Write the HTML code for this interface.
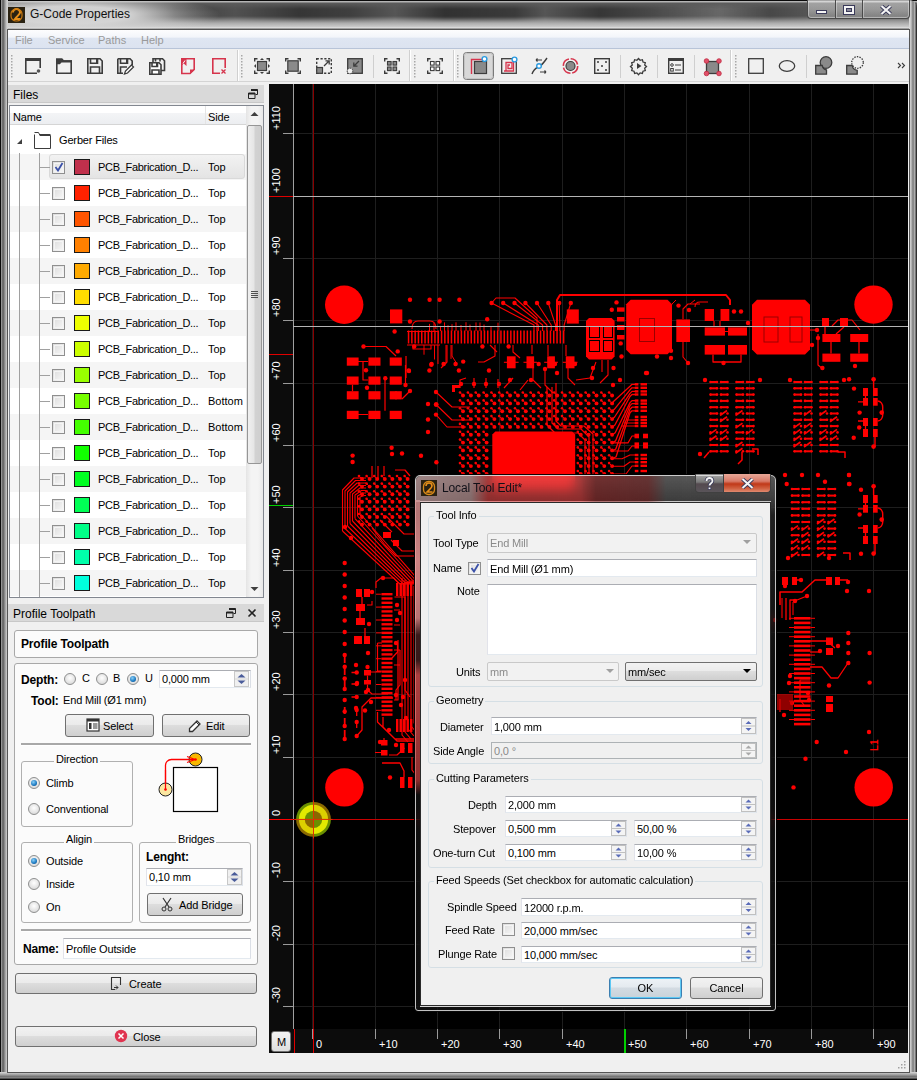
<!DOCTYPE html>
<html><head><meta charset="utf-8">
<style>
*{box-sizing:border-box;margin:0;padding:0}
html,body{width:917px;height:1080px;overflow:hidden;background:#5a5a5a}
body{position:relative;font-family:"Liberation Sans",sans-serif;font-size:11px;color:#000}
.a{position:absolute}
.t{position:absolute;white-space:nowrap;line-height:1}
#title{left:0;top:0;width:917px;height:30px;background:linear-gradient(#0a0a0a 0,#0a0a0a 1px,#b8b8b8 1px,#b0b0b0 2px,#5c5c5c 3px,#5a5a5a 16px,#9a9a9a 21px,#cccccc 27px,#e8e8e8 28px,#555 29px)}
#tglow{left:0;top:1px;width:260px;height:28px;background:radial-gradient(ellipse 150px 22px at 70px 14px,rgba(215,215,215,.95) 40%,rgba(200,200,200,0))}
#tstreak{left:0;top:3px;width:917px;height:20px;-webkit-mask-image:linear-gradient(transparent,#000 30%,#000 70%,transparent);background:linear-gradient(90deg,rgba(0,0,0,0) 130px,rgba(0,0,0,.35) 175px,rgba(0,0,0,.1) 235px,rgba(0,0,0,.4) 300px,rgba(0,0,0,.3) 350px,rgba(0,0,0,.05) 395px,rgba(0,0,0,.45) 445px,rgba(0,0,0,.35) 515px,rgba(0,0,0,.05) 545px,rgba(0,0,0,.4) 600px,rgba(0,0,0,.2) 650px,rgba(255,255,255,.08) 720px,rgba(0,0,0,.2) 770px,rgba(0,0,0,.05) 810px)}
#lframe{left:0;top:0;width:8px;height:1080px;background:linear-gradient(90deg,#0a0a0a 0,#0a0a0a 1px,#a8a8a8 1px,#5a5a5a 3px,#9a9a9a 5px,#d0d0d0 7px)}
#rframe{left:909px;top:0;width:8px;height:1080px;border-radius:0 8px 0 0;background:linear-gradient(90deg,#e0e0e0 0,#c4c4c4 2px,#7a7a7a 4px,#9a9a9a 5px,#c0c0c0 6px,#303030 7px)}
#bframe{left:0;top:1072px;width:917px;height:8px;background:linear-gradient(#d8d8d8 0,#b0b0b0 2px,#6a6a6a 5px,#9a9a9a 6px,#0a0a0a 7px)}
#client{left:7px;top:29px;width:903px;height:1044px;background:#f0f0f0;border:1px solid #555}
#menu{left:8px;top:30px;width:901px;height:19px;background:linear-gradient(#fdfdfe 0,#f3f5fa 40%,#dfe6f2 45%,#dce3f0 100%);border-bottom:1px solid #b8c4d8}
#menu span{position:absolute;top:5px;color:#9a9a9a;font-size:11px;line-height:1}
#tb{left:8px;top:49px;width:901px;height:33px;background:#f0f0f0;border-bottom:1px solid #d4d4d4}
.hdl{position:absolute;top:55px;width:3px;height:24px;background:repeating-linear-gradient(#b0b0b0 0,#b0b0b0 1px,transparent 1px,transparent 3px)}
.tsep{position:absolute;top:50px;width:1px;height:31px;background:#d8d8d8;border-right:1px solid #fff}
.isep{position:absolute;top:55px;width:1px;height:22px;background:#c8c8c8}
.ic{position:absolute;top:57px;width:18px;height:18px}
.wb{position:absolute;top:0;height:19px;border:1px solid #4a4a4a;border-top:none;background:linear-gradient(rgba(255,255,255,.45),rgba(235,235,235,.45) 50%,rgba(200,200,200,.35));box-shadow:inset 0 0 0 1px rgba(255,255,255,.35)}
</style></head><body>
<div id="title" class="a"></div>
<div id="tstreak" class="a"></div>
<div id="tglow" class="a"></div>
<div id="lframe" class="a"></div>
<div id="rframe" class="a"></div>
<div id="bframe" class="a"></div>
<div id="client" class="a"></div>
<!-- title icon & text -->
<svg class="a" style="left:8px;top:7px" width="17" height="16" viewBox="0 0 17 16"><rect width="17" height="16" fill="#2a2212"/><path d="M5 5.5a3.5 3.5 0 0 1 7 0c0 2-3 3.5-5 6.5h5.5" fill="none" stroke="#e8901a" stroke-width="2"/><rect x="3" y="2" width="11" height="12" rx="5" fill="none" stroke="#c87810" stroke-width="1.2"/></svg>
<div class="t" style="left:30px;top:8px;font-size:12px;color:#101010">G-Code Properties</div>
<!-- window buttons -->
<div class="wb" style="left:807px;width:29px;border-radius:0 0 0 4px;border-right:none"></div>
<div class="wb" style="left:835px;width:28px;border-right:none"></div>
<div class="wb" style="left:862px;width:48px;border-radius:0 0 4px 0"></div>
<div class="a" style="left:816px;top:10px;width:11px;height:4px;background:#f4f4f4;border:1px solid #3a3a5a"></div>
<div class="a" style="left:843px;top:5px;width:12px;height:10px;background:#f4f4f4;border:1px solid #3a3a5a"></div>
<div class="a" style="left:846px;top:8px;width:6px;height:4px;background:#8a8a9a;border:1px solid #3a3a5a"></div>
<svg class="a" style="left:880px;top:5px" width="12" height="10" viewBox="0 0 12 10"><path d="M1.5 1L10.5 9M10.5 1L1.5 9" stroke="#3a3a5a" stroke-width="4"/><path d="M1.5 1L10.5 9M10.5 1L1.5 9" stroke="#f4f4f4" stroke-width="2.2"/></svg>
<!-- menu -->
<div id="menu" class="a"><span style="left:7px">File</span><span style="left:40px">Service</span><span style="left:90px">Paths</span><span style="left:133px">Help</span></div>
<!-- toolbar -->
<div id="tb" class="a"></div>
<svg class="a" style="left:0;top:0" width="917" height="84" viewBox="0 0 917 84">
<g fill="none" stroke="#3c3c3c" stroke-width="1.6">
<!-- handles -->
</g>
<g fill="#a8a8a8">
<rect x="11" y="55" width="1.5" height="1.5"/><rect x="11" y="58" width="1.5" height="1.5"/><rect x="11" y="61" width="1.5" height="1.5"/><rect x="11" y="64" width="1.5" height="1.5"/><rect x="11" y="67" width="1.5" height="1.5"/><rect x="11" y="70" width="1.5" height="1.5"/><rect x="11" y="73" width="1.5" height="1.5"/><rect x="11" y="76" width="1.5" height="1.5"/>
<rect x="241" y="55" width="1.5" height="1.5"/><rect x="241" y="58" width="1.5" height="1.5"/><rect x="241" y="61" width="1.5" height="1.5"/><rect x="241" y="64" width="1.5" height="1.5"/><rect x="241" y="67" width="1.5" height="1.5"/><rect x="241" y="70" width="1.5" height="1.5"/><rect x="241" y="73" width="1.5" height="1.5"/><rect x="241" y="76" width="1.5" height="1.5"/>
<rect x="414" y="55" width="1.5" height="1.5"/><rect x="414" y="58" width="1.5" height="1.5"/><rect x="414" y="61" width="1.5" height="1.5"/><rect x="414" y="64" width="1.5" height="1.5"/><rect x="414" y="67" width="1.5" height="1.5"/><rect x="414" y="70" width="1.5" height="1.5"/><rect x="414" y="73" width="1.5" height="1.5"/><rect x="414" y="76" width="1.5" height="1.5"/>
<rect x="457" y="55" width="1.5" height="1.5"/><rect x="457" y="58" width="1.5" height="1.5"/><rect x="457" y="61" width="1.5" height="1.5"/><rect x="457" y="64" width="1.5" height="1.5"/><rect x="457" y="67" width="1.5" height="1.5"/><rect x="457" y="70" width="1.5" height="1.5"/><rect x="457" y="73" width="1.5" height="1.5"/><rect x="457" y="76" width="1.5" height="1.5"/>
<rect x="735" y="55" width="1.5" height="1.5"/><rect x="735" y="58" width="1.5" height="1.5"/><rect x="735" y="61" width="1.5" height="1.5"/><rect x="735" y="64" width="1.5" height="1.5"/><rect x="735" y="67" width="1.5" height="1.5"/><rect x="735" y="70" width="1.5" height="1.5"/><rect x="735" y="73" width="1.5" height="1.5"/><rect x="735" y="76" width="1.5" height="1.5"/>
</g>
<!-- toolbar boundaries -->
<g fill="#d0d0d0"><rect x="237" y="50" width="1" height="31"/><rect x="409" y="50" width="1" height="31"/><rect x="453" y="50" width="1" height="31"/><rect x="730" y="50" width="1" height="31"/></g>
<g fill="#fff"><rect x="238" y="50" width="1" height="31"/><rect x="410" y="50" width="1" height="31"/><rect x="454" y="50" width="1" height="31"/><rect x="731" y="50" width="1" height="31"/></g>
<!-- inner separators -->
<g fill="#cfcfcf"><rect x="373" y="55" width="1" height="23"/><rect x="620" y="55" width="1" height="23"/><rect x="657" y="55" width="1" height="23"/><rect x="694" y="55" width="1" height="23"/><rect x="806" y="55" width="1" height="23"/></g>
<!-- 1 new -->
<g stroke="#3c3c3c" fill="none" stroke-width="1.6">
<path d="M25.8 59.5V73.2H37M40.2 59.5V68"/><rect x="25" y="58" width="16" height="3" fill="#3c3c3c" stroke="none"/>
</g><circle cx="38.5" cy="71" r="1.8" fill="#555"/>
<!-- 2 open -->
<path d="M56.8 59.2H62l1.5 1.8H71.2V73.2H56.8Z" fill="none" stroke="#3c3c3c" stroke-width="1.6"/><path d="M56 58.5H62l1.5 1.8H72V62.5H61.5l-1.7 1.8H56Z" fill="#3c3c3c"/>
<!-- 3 save -->
<g fill="none" stroke="#3c3c3c" stroke-width="1.6"><path d="M87.8 58.8H100l2.2 2.2V73.2H87.8Z"/><path d="M90.5 59V63.2H97.5V59"/><path d="M90.5 73V67H99.5V73"/></g><rect x="96" y="59" width="2" height="4" fill="#3c3c3c"/>
<!-- 4 save as -->
<g fill="none" stroke="#3c3c3c" stroke-width="1.6"><path d="M117.8 58.8H130l2.2 2.2V65M117.8 58.8V73.2H123"/><path d="M120.5 59V63.2H127.5V59"/><path d="M120.5 73V67H127"/></g><rect x="126" y="59" width="2" height="4" fill="#3c3c3c"/>
<path d="M124.5 74l1-3 6-6 2 2-6 6z" fill="#fff" stroke="#3c3c3c" stroke-width="1.3"/>
<!-- 5 save all -->
<g fill="none" stroke="#3c3c3c" stroke-width="1.6"><path d="M153 62V58.8H162.5l2 2V70.5H161"/><path d="M155.5 59V61.5M160 59V61.5"/><path d="M149.8 62.8H159l2 2V74.2H149.8Z" fill="#fff"/><path d="M152 63V66.5H157.5V63"/><path d="M152 74V70H159V74"/></g><rect x="156" y="63" width="1.6" height="3.5" fill="#3c3c3c"/>
<!-- 6 red doc -->
<g fill="none" stroke="#d6344c" stroke-width="1.6"><path d="M186 58.8H194.2V69.5L190 73.5H181.8V64"/></g><path d="M181 58h5.5v8l-2.8-2.5L181 66Z" fill="#d6344c"/><path d="M190 74v-4.5h4.8Z" fill="#d6344c"/><path d="M183 63.5l2-3" stroke="#fff" stroke-width="1"/>
<!-- 7 red close -->
<g fill="none" stroke="#d6344c" stroke-width="1.6"><path d="M220 73.2H212.8V58.8H225.2V68"/><path d="M221.5 69.5l4 4M225.5 69.5l-4 4" stroke-width="1.3"/></g>
<!-- 8 zoom fit -->
<g fill="none" stroke="#3c3c3c" stroke-width="1.4"><path d="M254.7 61.5V58.7H257.5M266.5 58.7H269.3V61.5M269.3 70.5V73.3H266.5M257.5 73.3H254.7V70.5"/></g><rect x="257.5" y="61.5" width="9" height="9" fill="#8a8a8a" stroke="#3c3c3c" stroke-width="1.2"/><path d="M262 58l2 2h-4zM262 74l2-2h-4zM254 66l2-2v4zM270 66l-2-2v4z" fill="#3c3c3c"/>
<!-- 9 zoom full -->
<g fill="none" stroke="#3c3c3c" stroke-width="1.4"><path d="M285.7 61.5V58.7H288.5M297.5 58.7H300.3V61.5M300.3 70.5V73.3H297.5M288.5 73.3H285.7V70.5"/></g><rect x="287.8" y="60.8" width="10.4" height="10.4" fill="#8a8a8a" stroke="#3c3c3c" stroke-width="1.2"/>
<!-- 10 dashed -->
<rect x="316.7" y="58.7" width="14.6" height="14.6" fill="none" stroke="#3c3c3c" stroke-width="1.4" stroke-dasharray="2.2 1.6"/><rect x="316.7" y="67.5" width="5.8" height="5.8" fill="#8a8a8a" stroke="#3c3c3c" stroke-width="1.2"/><path d="M324 66l5-5M325.5 60.8h3.7v3.7" fill="none" stroke="#3c3c3c" stroke-width="1.3"/>
<!-- 11 zoom gray -->
<rect x="347.7" y="58.7" width="14.6" height="14.6" fill="#8a8a8a" stroke="#3c3c3c" stroke-width="1.3"/><circle cx="350" cy="71" r="2.8" fill="#f0f0f0" stroke="#3c3c3c" stroke-width="1" stroke-dasharray="1.5 1"/><path d="M359 61l-5 5M353.8 62.5v3.7h3.7" fill="none" stroke="#3c3c3c" stroke-width="1.3"/>
<!-- 12 grid4 filled -->
<g fill="none" stroke="#3c3c3c" stroke-width="1.4"><path d="M384.7 61.5V58.7H387.5M396.5 58.7H399.3V61.5M399.3 70.5V73.3H396.5M387.5 73.3H384.7V70.5"/></g><g fill="#8a8a8a" stroke="#3c3c3c" stroke-width="1.1"><rect x="387.5" y="61.5" width="3.6" height="3.6"/><rect x="393" y="61.5" width="3.6" height="3.6"/><rect x="387.5" y="67" width="3.6" height="3.6"/><rect x="393" y="67" width="3.6" height="3.6"/></g>
<!-- 13 grid4 outline -->
<g fill="none" stroke="#3c3c3c" stroke-width="1.4"><path d="M427.7 61.5V58.7H430.5M439.5 58.7H442.3V61.5M442.3 70.5V73.3H439.5M430.5 73.3H427.7V70.5"/></g><g fill="#fff" stroke="#3c3c3c" stroke-width="1.1"><rect x="430.5" y="61.5" width="3.6" height="3.6"/><rect x="436" y="61.5" width="3.6" height="3.6"/><rect x="430.5" y="67" width="3.6" height="3.6"/><rect x="436" y="67" width="3.6" height="3.6"/></g>
<!-- 14 pressed -->
<rect x="463.5" y="52.5" width="30" height="27" rx="3" fill="#d8d8d8" stroke="#7a7a7a" stroke-width="1"/><rect x="464.5" y="53.5" width="28" height="25" rx="2" fill="none" stroke="#c4c4c4" stroke-width="1"/>
<rect x="474.5" y="61.5" width="12" height="12" fill="#8a8a8a" stroke="#3c3c3c" stroke-width="1.2"/><path d="M471.5 74V59.5H483" fill="none" stroke="#d6344c" stroke-width="1.4"/><circle cx="484.5" cy="59" r="2.4" fill="#fff" stroke="#2a9ae0" stroke-width="1.4"/>
<!-- 15 spiral -->
<rect x="501.7" y="58.7" width="14.6" height="14.6" fill="none" stroke="#3c3c3c" stroke-width="1.3"/><path d="M506 71V62.5H512V68.5H508V65H510" fill="none" stroke="#d6344c" stroke-width="1.3"/><path d="M504 71H513.5V61" fill="none" stroke="#d6344c" stroke-width="1.3"/><circle cx="514.5" cy="59.5" r="2.4" fill="#fff" stroke="#2a9ae0" stroke-width="1.4"/>
<!-- 16 curve -->
<path d="M532 74c2-6 5-6 8-8s5-5 7-8" fill="none" stroke="#3c3c3c" stroke-width="1.4"/><circle cx="539" cy="66" r="2.3" fill="#fff" stroke="#2a9ae0" stroke-width="1.4"/><path d="M536 60h6M536 60l1.5-1.5M536 60l1.5 1.5M540 72h6M546 72l-1.5-1.5M546 72l-1.5 1.5" fill="none" stroke="#3c3c3c" stroke-width="1.1"/>
<!-- 17 red circle -->
<circle cx="570.5" cy="66" r="7.2" fill="none" stroke="#d6344c" stroke-width="1.6" stroke-dasharray="9.5 1.8"/><circle cx="570.5" cy="66" r="4.5" fill="#8a8a8a" stroke="#3c3c3c" stroke-width="1.2"/>
<!-- 18 dice -->
<rect x="594.7" y="58.7" width="14.6" height="14.6" fill="none" stroke="#3c3c3c" stroke-width="1.4"/><g fill="#3c3c3c"><circle cx="598" cy="62" r="1"/><circle cx="606" cy="62" r="1"/><circle cx="602" cy="66" r="1"/><circle cx="598" cy="70" r="1"/><circle cx="606" cy="70" r="1"/></g>
<!-- 19 gear -->
<path d="M638.5 58.5l1.6 1.8 2.3-.6.6 2.3 2.3.7-.6 2.3 1.8 1.6-1.8 1.6.6 2.3-2.3.7-.6 2.3-2.3-.6-1.6 1.8-1.6-1.8-2.3.6-.6-2.3-2.3-.7.6-2.3-1.8-1.6 1.8-1.6-.6-2.3 2.3-.7.6-2.3 2.3.6z" fill="none" stroke="#3c3c3c" stroke-width="1.3"/><path d="M637 63v6l4.5-3z" fill="#3c3c3c"/>
<!-- 20 window list -->
<rect x="668.7" y="58.7" width="14.6" height="14.6" fill="none" stroke="#3c3c3c" stroke-width="1.4"/><rect x="668" y="58" width="16" height="3" fill="#3c3c3c"/><circle cx="672" cy="65" r="1.3" fill="none" stroke="#3c3c3c"/><rect x="670.7" y="68.5" width="2.6" height="2.6" fill="none" stroke="#3c3c3c" stroke-width="1"/><path d="M675 65h6M675 70h6" stroke="#3c3c3c" stroke-width="1.2"/>
<!-- 21 red corners -->
<rect x="706.5" y="61.5" width="12" height="12" fill="#8a8a8a" stroke="#3c3c3c" stroke-width="1.3"/><g fill="#e0506a" stroke="#c02a40" stroke-width=".8"><circle cx="706.5" cy="61" r="2.3"/><circle cx="719" cy="61" r="2.3"/><circle cx="706.5" cy="73.5" r="2.3"/><circle cx="719" cy="73.5" r="2.3"/></g>
<!-- 22 rect -->
<rect x="748.7" y="58.7" width="14.6" height="14.6" fill="none" stroke="#3c3c3c" stroke-width="1.3"/>
<!-- 23 ellipse -->
<ellipse cx="787" cy="66" rx="7.7" ry="5.3" fill="none" stroke="#3c3c3c" stroke-width="1.3"/>
<!-- 24 shapes -->
<circle cx="826" cy="62.5" r="5.8" fill="#8a8a8a" stroke="#3c3c3c" stroke-width="1.3"/><path d="M815.7 65.5h6.5a5.8 5.8 0 0 0 4.3 4.5v4.2H815.7Z" fill="#8a8a8a" stroke="#3c3c3c" stroke-width="1.3"/>
<!-- 25 shapes dotted -->
<circle cx="857.5" cy="62.5" r="5.8" fill="none" stroke="#3c3c3c" stroke-width="1.3" stroke-dasharray="1.4 1.2"/><path d="M846.7 65.5h5.5a5.8 5.8 0 0 0 5 4.8v3.9H846.7Z" fill="#8a8a8a" stroke="#3c3c3c" stroke-width="1.3"/>
<!-- >> -->
<path d="M898 63l2.5 2.5-2.5 2.5M902 63l2.5 2.5-2.5 2.5" fill="none" stroke="#3c3c3c" stroke-width="1.1"/>
</svg>
<style>
.dt{position:absolute;left:8px;width:256px;height:18px;background:#d9d9d9;border-bottom:1px solid #c8c8c8}
.dt span{position:absolute;left:5px;top:4px;font-size:12px;line-height:1;color:#000}
.row{position:absolute;left:10px;width:236px;height:26px}
.cb{position:absolute;left:52px;width:13px;height:13px;border:1px solid #8f8f8f;background:linear-gradient(135deg,#dcdcdc,#f8f8f8)}
.cb::after{content:"";position:absolute;left:1px;top:1px;right:1px;bottom:1px;border:1px solid #f4f4f4}
.sw{position:absolute;left:74px;width:16px;height:16px;border:1px solid #1a1a1a}
.fn{position:absolute;left:98px;font-size:11px;letter-spacing:-0.3px;line-height:1}
.sd{position:absolute;left:208px;font-size:11px;line-height:1}
.hl{position:absolute;left:39px;width:11px;height:1px;background:#a0a0a0}
.gb{position:absolute;border:1px solid #a8a8a8;border-radius:3px;background:#fbfbfb}
.fg{position:absolute;border:1px solid #b0b0b0;border-radius:3px}
.lbl{position:absolute;font-size:11px;line-height:1;white-space:nowrap;letter-spacing:-0.15px}
.bold{font-weight:bold}
.rad{position:absolute;width:12px;height:12px;border-radius:50%;border:1px solid #8e8f8f;background:radial-gradient(circle at 50% 40%,#fff 0,#e8e8e8 50%,#d0d0d0 100%)}
.rad.on::after{content:"";position:absolute;left:2px;top:2px;width:6px;height:6px;border-radius:50%;background:radial-gradient(circle at 40% 35%,#8ad0f8 0,#1a78c0 60%,#0a3a70 100%)}
.btn{position:absolute;border:1px solid #707070;border-radius:3px;background:linear-gradient(#f2f2f2 0,#ebebeb 45%,#dddddd 50%,#cfcfcf 100%)}
.btn span{position:absolute;top:50%;transform:translateY(-50%);font-size:11px;line-height:1;white-space:nowrap;letter-spacing:-0.1px}
.sp{position:absolute;background:#fff;border:1px solid #abadb3;border-top-color:#abadb3;border-left-color:#e2e3ea;border-bottom-color:#e3e9ef;border-right-color:#dbdfe6}
.spb{position:absolute;right:1px;top:1px;bottom:1px;width:15px}
.sep{position:absolute;height:3px;border-top:2px solid #a8a8a8;border-bottom:1px solid #fff;background:#e8e8e8}
</style>
<div class="dt" style="top:85px"><span>Files</span></div>
<svg class="a" style="left:248px;top:89px" width="10" height="10" viewBox="0 0 10 10"><path d="M3 .5h6.5v5H7.5M.5 4h6.5v5.5H.5z" fill="none" stroke="#222" stroke-width="1"/><path d="M3 .5h6.5v1.5H3zM.5 4h6.5v1.5H.5z" fill="#222"/></svg>
<div class="a" style="left:9px;top:105px;width:255px;height:493px;background:#fff;border:1px solid #828790"></div>
<div class="a" style="left:10px;top:106px;width:236px;height:19px;background:linear-gradient(#fff 0,#fff 40%,#f3f4f6 41%,#eceef1);border-bottom:1px solid #d5d5d5"></div>
<div class="a" style="left:205px;top:106px;width:1px;height:18px;background:#e4e4e4"></div>
<div class="lbl" style="left:13px;top:112px">Name</div><div class="lbl" style="left:208px;top:112px">Side</div>
<div class="a" style="left:246px;top:106px;width:17px;height:491px;background:linear-gradient(90deg,#e4e4e4,#f4f4f4 30%,#f4f4f4 70%,#e8e8e8)"></div>
<svg class="a" style="left:250px;top:111px" width="9" height="6"><path d="M0.5 5L4.5 1L8.5 5z" fill="#404040"/></svg>
<svg class="a" style="left:250px;top:586px" width="9" height="6"><path d="M0.5 1L4.5 5L8.5 1z" fill="#404040"/></svg>
<div class="a" style="left:247px;top:125px;width:15px;height:339px;border:1px solid #969696;border-radius:2px;background:linear-gradient(90deg,#f0f0f0,#e6e6e6 45%,#d2d2d2 55%,#cfcfcf)"></div>
<div class="a" style="left:251px;top:291px;width:7px;height:7px;background:repeating-linear-gradient(#505050 0,#505050 1px,transparent 1px,transparent 2px)"></div>
<svg class="a" style="left:16px;top:138px" width="7" height="7"><path d="M6 1V6H1z" fill="#404040"/></svg>
<svg class="a" style="left:34px;top:132px" width="18" height="17" viewBox="0 0 18 17"><path d="M.5 2.5V16.5H16.5V3.5H6L4.5 .5H.5" fill="#fff" stroke="#3c3c3c" stroke-width="1"/><path d="M5 2H16.5V3.5H5.8z" fill="#3c3c3c"/></svg>
<div class="lbl" style="left:59px;top:135px">Gerber Files</div>

<div class="a" style="left:10px;top:154px;width:236px;height:26px;background:#f5f5f5"></div>
<div class="a" style="left:49px;top:154px;width:196px;height:25px;border:1px solid #d9d9d9;border-radius:3px;background:linear-gradient(#f2f2f2,#e4e4e4)"></div>

<div class="hl" style="top:167px"></div>
<div class="cb" style="top:161px"></div>
<div class="sw" style="top:159px;background:#c0304c"></div>
<div class="fn" style="top:162px">PCB_Fabrication_D...</div>
<div class="sd" style="top:162px">Top</div>
<div class="hl" style="top:193px"></div>
<div class="cb" style="top:187px"></div>
<div class="sw" style="top:185px;background:#ff2200"></div>
<div class="fn" style="top:188px">PCB_Fabrication_D...</div>
<div class="sd" style="top:188px">Top</div>
<div class="a" style="left:10px;top:206px;width:236px;height:26px;background:#f5f5f5"></div>
<div class="hl" style="top:219px"></div>
<div class="cb" style="top:213px"></div>
<div class="sw" style="top:211px;background:#ff5500"></div>
<div class="fn" style="top:214px">PCB_Fabrication_D...</div>
<div class="sd" style="top:214px">Top</div>
<div class="hl" style="top:245px"></div>
<div class="cb" style="top:239px"></div>
<div class="sw" style="top:237px;background:#ff8000"></div>
<div class="fn" style="top:240px">PCB_Fabrication_D...</div>
<div class="sd" style="top:240px">Top</div>
<div class="a" style="left:10px;top:258px;width:236px;height:26px;background:#f5f5f5"></div>
<div class="hl" style="top:271px"></div>
<div class="cb" style="top:265px"></div>
<div class="sw" style="top:263px;background:#ffaa00"></div>
<div class="fn" style="top:266px">PCB_Fabrication_D...</div>
<div class="sd" style="top:266px">Top</div>
<div class="hl" style="top:297px"></div>
<div class="cb" style="top:291px"></div>
<div class="sw" style="top:289px;background:#ffdd00"></div>
<div class="fn" style="top:292px">PCB_Fabrication_D...</div>
<div class="sd" style="top:292px">Top</div>
<div class="a" style="left:10px;top:310px;width:236px;height:26px;background:#f5f5f5"></div>
<div class="hl" style="top:323px"></div>
<div class="cb" style="top:317px"></div>
<div class="sw" style="top:315px;background:#eeff00"></div>
<div class="fn" style="top:318px">PCB_Fabrication_D...</div>
<div class="sd" style="top:318px">Top</div>
<div class="hl" style="top:349px"></div>
<div class="cb" style="top:343px"></div>
<div class="sw" style="top:341px;background:#ccff00"></div>
<div class="fn" style="top:344px">PCB_Fabrication_D...</div>
<div class="sd" style="top:344px">Top</div>
<div class="a" style="left:10px;top:362px;width:236px;height:26px;background:#f5f5f5"></div>
<div class="hl" style="top:375px"></div>
<div class="cb" style="top:369px"></div>
<div class="sw" style="top:367px;background:#99ff00"></div>
<div class="fn" style="top:370px">PCB_Fabrication_D...</div>
<div class="sd" style="top:370px">Top</div>
<div class="hl" style="top:401px"></div>
<div class="cb" style="top:395px"></div>
<div class="sw" style="top:393px;background:#77ff00"></div>
<div class="fn" style="top:396px">PCB_Fabrication_D...</div>
<div class="sd" style="top:396px">Bottom</div>
<div class="a" style="left:10px;top:414px;width:236px;height:26px;background:#f5f5f5"></div>
<div class="hl" style="top:427px"></div>
<div class="cb" style="top:421px"></div>
<div class="sw" style="top:419px;background:#44ff00"></div>
<div class="fn" style="top:422px">PCB_Fabrication_D...</div>
<div class="sd" style="top:422px">Bottom</div>
<div class="hl" style="top:453px"></div>
<div class="cb" style="top:447px"></div>
<div class="sw" style="top:445px;background:#11ff00"></div>
<div class="fn" style="top:448px">PCB_Fabrication_D...</div>
<div class="sd" style="top:448px">Top</div>
<div class="a" style="left:10px;top:466px;width:236px;height:26px;background:#f5f5f5"></div>
<div class="hl" style="top:479px"></div>
<div class="cb" style="top:473px"></div>
<div class="sw" style="top:471px;background:#00ff22"></div>
<div class="fn" style="top:474px">PCB_Fabrication_D...</div>
<div class="sd" style="top:474px">Top</div>
<div class="hl" style="top:505px"></div>
<div class="cb" style="top:499px"></div>
<div class="sw" style="top:497px;background:#00ff55"></div>
<div class="fn" style="top:500px">PCB_Fabrication_D...</div>
<div class="sd" style="top:500px">Top</div>
<div class="a" style="left:10px;top:518px;width:236px;height:26px;background:#f5f5f5"></div>
<div class="hl" style="top:531px"></div>
<div class="cb" style="top:525px"></div>
<div class="sw" style="top:523px;background:#00ff88"></div>
<div class="fn" style="top:526px">PCB_Fabrication_D...</div>
<div class="sd" style="top:526px">Top</div>
<div class="hl" style="top:557px"></div>
<div class="cb" style="top:551px"></div>
<div class="sw" style="top:549px;background:#00ffaa"></div>
<div class="fn" style="top:552px">PCB_Fabrication_D...</div>
<div class="sd" style="top:552px">Top</div>
<div class="a" style="left:10px;top:570px;width:236px;height:26px;background:#f5f5f5"></div>
<div class="hl" style="top:583px"></div>
<div class="cb" style="top:577px"></div>
<div class="sw" style="top:575px;background:#00ffdd"></div>
<div class="fn" style="top:578px">PCB_Fabrication_D...</div>
<div class="sd" style="top:578px">Top</div>
<svg class="a" style="left:54px;top:162px" width="10" height="10"><path d="M1.5 5L4 8.5L8.5 1" fill="none" stroke="#3a50a8" stroke-width="1.8"/></svg>
<div class="a" style="left:19px;top:153px;width:1px;height:444px;background:#a0a0a0"></div>
<div class="a" style="left:39px;top:153px;width:1px;height:444px;background:#a0a0a0"></div><!-- Profile toolpath dock -->
<div class="dt" style="top:604px"><span>Profile Toolpath</span></div>
<svg class="a" style="left:226px;top:608px" width="10" height="10" viewBox="0 0 10 10"><path d="M3 .5h6.5v5H7.5M.5 4h6.5v5.5H.5z" fill="none" stroke="#222" stroke-width="1"/><path d="M3 .5h6.5v1.5H3zM.5 4h6.5v1.5H.5z" fill="#222"/></svg>
<svg class="a" style="left:247px;top:608px" width="10" height="10" viewBox="0 0 10 10"><path d="M1.5 1.5l7 7M8.5 1.5l-7 7" stroke="#222" stroke-width="1.6"/></svg>
<div class="gb" style="left:14px;top:630px;width:244px;height:28px"></div>
<div class="lbl bold" style="left:21px;top:638px;font-size:12px">Profile Toolpath</div>
<div class="gb" style="left:14px;top:663px;width:244px;height:302px"></div>
<div class="lbl bold" style="left:21px;top:674px;font-size:12px">Depth:</div>
<div class="rad" style="left:64px;top:673px"></div><div class="lbl" style="left:82px;top:673px">C</div>
<div class="rad" style="left:96px;top:673px"></div><div class="lbl" style="left:113px;top:673px">B</div>
<div class="rad on" style="left:127px;top:673px"></div><div class="lbl" style="left:145px;top:673px">U</div>
<div class="sp" style="left:159px;top:670px;width:92px;height:18px"></div>
<div class="lbl" style="left:162px;top:674px">0,000 mm</div>
<svg class="a" style="left:234px;top:671px" width="15" height="16" viewBox="0 0 15 16"><rect x=".5" y=".5" width="14" height="15" fill="#f0f0f0" stroke="#c8c8c8"/><path d="M3.5 6.5L7.5 3L11.5 6.5z" fill="#4a5c9a"/><path d="M3.5 9.5L7.5 13L11.5 9.5z" fill="#4a5c9a"/><path d="M1 8h13" stroke="#d8d8d8"/></svg>
<div class="lbl bold" style="left:31px;top:695px;font-size:12px">Tool:</div>
<div class="lbl" style="left:63px;top:695px">End Mill (Ø1 mm)</div>
<div class="btn" style="left:65px;top:714px;width:89px;height:23px"><span style="left:37px">Select</span></div>
<svg class="a" style="left:86px;top:718px" width="14" height="14" viewBox="0 0 14 14"><rect x="1" y="1" width="12" height="12" fill="#fff" stroke="#333" stroke-width="1.2"/><rect x="1" y="1" width="12" height="2.5" fill="#333"/><rect x="3" y="5" width="2.5" height="6" fill="#333"/><path d="M7 6h4.5M7 8h4.5M7 10h4.5" stroke="#333" stroke-width="1"/></svg>
<div class="btn" style="left:162px;top:714px;width:88px;height:23px"><span style="left:43px">Edit</span></div>
<svg class="a" style="left:188px;top:719px" width="14" height="14" viewBox="0 0 14 14"><path d="M1.5 12.5V9.5L9 2l3 3-7.5 7.5z" fill="#fff" stroke="#333" stroke-width="1.3"/><path d="M8 3l3 3" stroke="#333" stroke-width="1"/></svg>
<div class="sep" style="left:21px;top:743px;width:230px"></div>
<!-- direction -->
<div class="fg" style="left:21px;top:761px;width:112px;height:66px"></div>
<div class="lbl" style="left:54px;top:754px;background:#fbfbfb;padding:0 2px">Direction</div>
<div class="rad on" style="left:28px;top:777px"></div><div class="lbl" style="left:46px;top:778px">Climb</div>
<div class="rad" style="left:28px;top:803px"></div><div class="lbl" style="left:46px;top:804px">Conventional</div>
<svg class="a" style="left:155px;top:748px" width="70" height="70" viewBox="155 748 70 70">
<rect x="173.5" y="767.5" width="44" height="44" fill="#fff" stroke="#000" stroke-width="1.2"/>
<path d="M165.5 789.5V766a6 6 0 0 1 6-6.5H195" fill="none" stroke="#ff0000" stroke-width="1.3"/>
<circle cx="195.5" cy="759.5" r="6.5" fill="#f8b800" stroke="#222" stroke-width="1"/>
<circle cx="165.5" cy="789.5" r="6.5" fill="#fbe6a0" stroke="#222" stroke-width="1"/>
<path d="M165.5 789.5V770M187 756.5l8 3-8 3M171.5 759.5H195" fill="none" stroke="#ff0000" stroke-width="1.2"/>
<circle cx="195.5" cy="759.5" r="1.3" fill="#f00"/><circle cx="165.5" cy="789.5" r="1.3" fill="#f00"/>
</svg>
<!-- align -->
<div class="fg" style="left:21px;top:842px;width:112px;height:81px"></div>
<div class="lbl" style="left:64px;top:834px;background:#fbfbfb;padding:0 2px">Aligin</div>
<div class="rad on" style="left:28px;top:855px"></div><div class="lbl" style="left:46px;top:856px">Outside</div>
<div class="rad" style="left:28px;top:878px"></div><div class="lbl" style="left:46px;top:879px">Inside</div>
<div class="rad" style="left:28px;top:901px"></div><div class="lbl" style="left:46px;top:902px">On</div>
<!-- bridges -->
<div class="fg" style="left:139px;top:842px;width:112px;height:81px"></div>
<div class="lbl" style="left:176px;top:834px;background:#fbfbfb;padding:0 2px">Bridges</div>
<div class="lbl bold" style="left:146px;top:851px;font-size:12px">Lenght:</div>
<div class="sp" style="left:146px;top:868px;width:97px;height:18px"></div>
<div class="lbl" style="left:149px;top:872px">0,10 mm</div>
<svg class="a" style="left:227px;top:869px" width="15" height="16" viewBox="0 0 15 16"><rect x=".5" y=".5" width="14" height="15" fill="#f0f0f0" stroke="#c8c8c8"/><path d="M3.5 6.5L7.5 3L11.5 6.5z" fill="#4a5c9a"/><path d="M3.5 9.5L7.5 13L11.5 9.5z" fill="#4a5c9a"/><path d="M1 8h13" stroke="#d8d8d8"/></svg>
<div class="btn" style="left:147px;top:893px;width:96px;height:23px"><span style="left:31px">Add Bridge</span></div>
<svg class="a" style="left:160px;top:897px" width="14" height="15" viewBox="0 0 14 15"><path d="M3 1l6 9M11 1l-6 9" stroke="#333" stroke-width="1.2"/><circle cx="4" cy="12" r="2" fill="none" stroke="#333"/><circle cx="10" cy="12" r="2" fill="none" stroke="#333"/></svg>
<div class="sep" style="left:21px;top:929px;width:230px"></div>
<div class="lbl bold" style="left:23px;top:943px;font-size:12px">Name:</div>
<div class="sp" style="left:63px;top:938px;width:188px;height:21px"></div>
<div class="lbl" style="left:66px;top:944px">Profile Outside</div>
<div class="btn" style="left:15px;top:973px;width:242px;height:21px"><span style="left:113px">Create</span></div>
<svg class="a" style="left:110px;top:976px" width="12" height="15" viewBox="0 0 12 15"><path d="M5 13.5H1.5V1.5H10.5V9" fill="none" stroke="#333" stroke-width="1.1"/><path d="M6 9.5l2 2-2 2M4 11.5h4" fill="none" stroke="#333" stroke-width="1"/></svg>
<div class="btn" style="left:15px;top:1026px;width:242px;height:21px"><span style="left:117px">Close</span></div>
<svg class="a" style="left:114px;top:1029px" width="14" height="14" viewBox="0 0 14 14"><circle cx="7" cy="7" r="6.2" fill="#e03450"/><path d="M4.5 4.5l5 5M9.5 4.5l-5 5" stroke="#fff" stroke-width="1.5"/></svg>
<!-- status bar -->
<div class="a" style="left:8px;top:1053px;width:901px;height:19px;background:#f0f0f0"></div>
<svg class="a" style="left:895px;top:1060px" width="12" height="11"><g fill="#a0a0a0"><rect x="9" y="1" width="1.5" height="1.5"/><rect x="6" y="4" width="1.5" height="1.5"/><rect x="9" y="4" width="1.5" height="1.5"/><rect x="3" y="7" width="1.5" height="1.5"/><rect x="6" y="7" width="1.5" height="1.5"/><rect x="9" y="7" width="1.5" height="1.5"/></g></svg>
<svg class="a" style="left:0;top:0" width="917" height="1080" viewBox="0 0 917 1080" shape-rendering="crispEdges">
<rect x="264" y="84" width="5" height="969" fill="#f0f0f0"/>
<rect x="269" y="84" width="639" height="969" fill="#000"/>
<rect x="269" y="84" width="24" height="945" fill="#0c0c0c"/>
<rect x="269" y="1029" width="639" height="24" fill="#0c0c0c"/>
<rect x="312" y="84" width="1" height="945" fill="#1e1e1e"/>
<rect x="375" y="84" width="1" height="945" fill="#1e1e1e"/>
<rect x="437" y="84" width="1" height="945" fill="#1e1e1e"/>
<rect x="499" y="84" width="1" height="945" fill="#1e1e1e"/>
<rect x="562" y="84" width="1" height="945" fill="#1e1e1e"/>
<rect x="624" y="84" width="1" height="945" fill="#1e1e1e"/>
<rect x="686" y="84" width="1" height="945" fill="#1e1e1e"/>
<rect x="749" y="84" width="1" height="945" fill="#1e1e1e"/>
<rect x="811" y="84" width="1" height="945" fill="#1e1e1e"/>
<rect x="873" y="84" width="1" height="945" fill="#1e1e1e"/>
<rect x="293" y="1006" width="615" height="1" fill="#1e1e1e"/>
<rect x="293" y="944" width="615" height="1" fill="#1e1e1e"/>
<rect x="293" y="881" width="615" height="1" fill="#1e1e1e"/>
<rect x="293" y="819" width="615" height="1" fill="#1e1e1e"/>
<rect x="293" y="757" width="615" height="1" fill="#1e1e1e"/>
<rect x="293" y="694" width="615" height="1" fill="#1e1e1e"/>
<rect x="293" y="632" width="615" height="1" fill="#1e1e1e"/>
<rect x="293" y="570" width="615" height="1" fill="#1e1e1e"/>
<rect x="293" y="507" width="615" height="1" fill="#1e1e1e"/>
<rect x="293" y="445" width="615" height="1" fill="#1e1e1e"/>
<rect x="293" y="383" width="615" height="1" fill="#1e1e1e"/>
<rect x="293" y="320" width="615" height="1" fill="#1e1e1e"/>
<rect x="293" y="258" width="615" height="1" fill="#1e1e1e"/>
<rect x="293" y="196" width="615" height="1" fill="#1e1e1e"/>
<rect x="293" y="133" width="615" height="1" fill="#1e1e1e"/>
<rect x="283" y="1006" width="10" height="1" fill="#9a9a9a"/>
<text x="280" y="1003" transform="rotate(-90 280 1003)" font-family="Liberation Sans" font-size="11" fill="#fff" shape-rendering="auto">-30</text>
<rect x="283" y="944" width="10" height="1" fill="#9a9a9a"/>
<text x="280" y="941" transform="rotate(-90 280 941)" font-family="Liberation Sans" font-size="11" fill="#fff" shape-rendering="auto">-20</text>
<rect x="283" y="881" width="10" height="1" fill="#9a9a9a"/>
<text x="280" y="878" transform="rotate(-90 280 878)" font-family="Liberation Sans" font-size="11" fill="#fff" shape-rendering="auto">-10</text>
<rect x="283" y="819" width="10" height="1" fill="#9a9a9a"/>
<text x="280" y="816" transform="rotate(-90 280 816)" font-family="Liberation Sans" font-size="11" fill="#fff" shape-rendering="auto">0</text>
<rect x="283" y="757" width="10" height="1" fill="#9a9a9a"/>
<text x="280" y="754" transform="rotate(-90 280 754)" font-family="Liberation Sans" font-size="11" fill="#fff" shape-rendering="auto">+10</text>
<rect x="283" y="694" width="10" height="1" fill="#9a9a9a"/>
<text x="280" y="691" transform="rotate(-90 280 691)" font-family="Liberation Sans" font-size="11" fill="#fff" shape-rendering="auto">+20</text>
<rect x="283" y="632" width="10" height="1" fill="#9a9a9a"/>
<text x="280" y="629" transform="rotate(-90 280 629)" font-family="Liberation Sans" font-size="11" fill="#fff" shape-rendering="auto">+30</text>
<rect x="283" y="570" width="10" height="1" fill="#9a9a9a"/>
<text x="280" y="567" transform="rotate(-90 280 567)" font-family="Liberation Sans" font-size="11" fill="#fff" shape-rendering="auto">+40</text>
<rect x="283" y="507" width="10" height="1" fill="#9a9a9a"/>
<text x="280" y="504" transform="rotate(-90 280 504)" font-family="Liberation Sans" font-size="11" fill="#fff" shape-rendering="auto">+50</text>
<rect x="283" y="445" width="10" height="1" fill="#9a9a9a"/>
<text x="280" y="442" transform="rotate(-90 280 442)" font-family="Liberation Sans" font-size="11" fill="#fff" shape-rendering="auto">+60</text>
<rect x="283" y="383" width="10" height="1" fill="#9a9a9a"/>
<text x="280" y="380" transform="rotate(-90 280 380)" font-family="Liberation Sans" font-size="11" fill="#fff" shape-rendering="auto">+70</text>
<rect x="283" y="320" width="10" height="1" fill="#9a9a9a"/>
<text x="280" y="317" transform="rotate(-90 280 317)" font-family="Liberation Sans" font-size="11" fill="#fff" shape-rendering="auto">+80</text>
<rect x="283" y="258" width="10" height="1" fill="#9a9a9a"/>
<text x="280" y="255" transform="rotate(-90 280 255)" font-family="Liberation Sans" font-size="11" fill="#fff" shape-rendering="auto">+90</text>
<rect x="283" y="196" width="10" height="1" fill="#9a9a9a"/>
<text x="280" y="193" transform="rotate(-90 280 193)" font-family="Liberation Sans" font-size="11" fill="#fff" shape-rendering="auto">+100</text>
<rect x="283" y="133" width="10" height="1" fill="#9a9a9a"/>
<text x="280" y="130" transform="rotate(-90 280 130)" font-family="Liberation Sans" font-size="11" fill="#fff" shape-rendering="auto">+110</text>
<rect x="312" y="1029" width="1" height="10" fill="#9a9a9a"/>
<text x="316" y="1048" font-family="Liberation Sans" font-size="11" fill="#fff" shape-rendering="auto">0</text>
<rect x="375" y="1029" width="1" height="10" fill="#9a9a9a"/>
<text x="379" y="1048" font-family="Liberation Sans" font-size="11" fill="#fff" shape-rendering="auto">+10</text>
<rect x="437" y="1029" width="1" height="10" fill="#9a9a9a"/>
<text x="441" y="1048" font-family="Liberation Sans" font-size="11" fill="#fff" shape-rendering="auto">+20</text>
<rect x="499" y="1029" width="1" height="10" fill="#9a9a9a"/>
<text x="503" y="1048" font-family="Liberation Sans" font-size="11" fill="#fff" shape-rendering="auto">+30</text>
<rect x="562" y="1029" width="1" height="10" fill="#9a9a9a"/>
<text x="566" y="1048" font-family="Liberation Sans" font-size="11" fill="#fff" shape-rendering="auto">+40</text>
<rect x="624" y="1029" width="1" height="10" fill="#9a9a9a"/>
<text x="628" y="1048" font-family="Liberation Sans" font-size="11" fill="#fff" shape-rendering="auto">+50</text>
<rect x="686" y="1029" width="1" height="10" fill="#9a9a9a"/>
<text x="690" y="1048" font-family="Liberation Sans" font-size="11" fill="#fff" shape-rendering="auto">+60</text>
<rect x="749" y="1029" width="1" height="10" fill="#9a9a9a"/>
<text x="753" y="1048" font-family="Liberation Sans" font-size="11" fill="#fff" shape-rendering="auto">+70</text>
<rect x="811" y="1029" width="1" height="10" fill="#9a9a9a"/>
<text x="815" y="1048" font-family="Liberation Sans" font-size="11" fill="#fff" shape-rendering="auto">+80</text>
<rect x="873" y="1029" width="1" height="10" fill="#9a9a9a"/>
<text x="877" y="1048" font-family="Liberation Sans" font-size="11" fill="#fff" shape-rendering="auto">+90</text>
<rect x="293" y="84" width="1" height="945" fill="#a0a0a0"/>
<rect x="313" y="84" width="1" height="969" fill="#8a0000"/>
<rect x="293" y="819" width="615" height="1" fill="#c80000"/>
<rect x="269" y="196" width="24" height="1" fill="#e00000"/>
<rect x="269" y="354" width="24" height="1" fill="#e00000"/>
<rect x="269" y="819" width="24" height="1" fill="#ff0000"/>
<rect x="294" y="1029" width="1" height="24" fill="#e00000"/>
<rect x="313" y="1029" width="1" height="24" fill="#e00000"/>
<rect x="624" y="1029" width="2" height="24" fill="#00d000"/>
<rect x="269" y="505" width="24" height="1" fill="#00d000"/>
</svg>
<div class="btn" style="left:271px;top:1031px;width:20px;height:21px;background:linear-gradient(#f4f4f4,#dedede)"><span style="left:5px">M</span></div><svg class="a" style="left:0;top:0" width="917" height="1080" viewBox="0 0 917 1080"><defs><clipPath id="vc"><rect x="294" y="84" width="614" height="945"/></clipPath></defs><g clip-path="url(#vc)" fill="#ff0000"><circle cx="344.2" cy="304.8" r="19.2"/>
<circle cx="873.5" cy="304.6" r="19.2"/>
<circle cx="344.4" cy="787.4" r="19.2"/>
<circle cx="873.7" cy="787.4" r="19.2"/>
<rect x="390.0" y="309.4" width="12.3" height="14.0"/>
<circle cx="410.0" cy="299.8" r="2.2"/>
<circle cx="429.6" cy="299.8" r="2.2"/>
<circle cx="439.6" cy="299.8" r="2.2"/>
<circle cx="459.4" cy="299.8" r="2.2"/>
<circle cx="410.0" cy="321.5" r="2.2"/>
<circle cx="439.6" cy="321.5" r="2.2"/>
<circle cx="394.6" cy="331.5" r="2.2"/>
<circle cx="363.5" cy="346.5" r="2.2"/>
<circle cx="397.7" cy="351.4" r="2.2"/>
<circle cx="366.0" cy="370.3" r="2.2"/>
<circle cx="367.0" cy="387.8" r="2.2"/>
<circle cx="385.3" cy="378.2" r="2.2"/>
<circle cx="409.0" cy="371.0" r="2.2"/>
<circle cx="405.5" cy="385.0" r="2.2"/>
<circle cx="410.0" cy="391.0" r="2.2"/>
<circle cx="431.3" cy="364.8" r="2.2"/>
<circle cx="428.0" cy="404.0" r="2.2"/>
<circle cx="436.4" cy="404.5" r="2.2"/>
<circle cx="428.0" cy="419.5" r="2.2"/>
<circle cx="421.0" cy="455.8" r="2.2"/>
<circle cx="436.4" cy="462.2" r="2.2"/>
<circle cx="391.6" cy="447.8" r="2.2"/>
<circle cx="392.0" cy="454.0" r="2.2"/>
<circle cx="402.0" cy="453.5" r="2.2"/>
<circle cx="352.6" cy="455.6" r="2.2"/>
<circle cx="352.6" cy="462.0" r="2.2"/>
<rect x="346.8" y="357.5" width="11.8" height="8.2"/>
<rect x="368.4" y="357.5" width="12.1" height="8.2"/>
<rect x="389.7" y="357.5" width="12.1" height="8.2"/>
<rect x="346.8" y="376.5" width="11.8" height="8.2"/>
<rect x="368.4" y="376.5" width="12.1" height="8.2"/>
<rect x="389.7" y="376.5" width="12.1" height="8.2"/>
<rect x="346.8" y="391.2" width="11.8" height="8.2"/>
<rect x="368.4" y="391.2" width="12.1" height="8.2"/>
<rect x="389.7" y="391.2" width="12.1" height="8.2"/>
<rect x="346.8" y="410.8" width="11.8" height="8.2"/>
<rect x="368.4" y="410.8" width="12.1" height="8.2"/>
<rect x="389.7" y="410.8" width="12.1" height="8.2"/>
<path d="M358 361.5H368M358 414.5H368M352.5 384.7V391.2M363.5 346.5H386L396 356" fill="none" stroke="#ff0000" stroke-width="1.2" stroke-linejoin="round"/>
<path d="M363 361.5V380H368M374 346.5" fill="none" stroke="#ff0000" stroke-width="1.2" stroke-linejoin="round"/>
<path d="M385 380V410.8M396 399.4V391M405.5 385V365M410 391L402 399" fill="none" stroke="#ff0000" stroke-width="1.2" stroke-linejoin="round"/>
<path d="M406 356V378" fill="none" stroke="#ff0000" stroke-width="1.2" stroke-linejoin="round"/>
<rect x="407.80" y="330.5" width="1.5" height="13"/>
<rect x="411.10" y="330.5" width="1.5" height="13"/>
<rect x="414.40" y="330.5" width="1.5" height="13"/>
<rect x="417.70" y="330.5" width="1.5" height="13"/>
<rect x="421.00" y="330.5" width="1.5" height="13"/>
<rect x="424.30" y="330.5" width="1.5" height="13"/>
<rect x="427.60" y="330.5" width="1.5" height="13"/>
<rect x="430.90" y="330.5" width="1.5" height="13"/>
<rect x="434.20" y="330.5" width="1.5" height="13"/>
<rect x="437.50" y="330.5" width="1.5" height="13"/>
<rect x="440.80" y="330.5" width="1.5" height="13"/>
<rect x="444.10" y="330.5" width="1.5" height="13"/>
<rect x="447.40" y="330.5" width="1.5" height="13"/>
<rect x="450.70" y="330.5" width="1.5" height="13"/>
<rect x="454.00" y="330.5" width="1.5" height="13"/>
<rect x="457.30" y="330.5" width="1.5" height="13"/>
<rect x="460.60" y="330.5" width="1.5" height="13"/>
<rect x="463.90" y="330.5" width="1.5" height="13"/>
<rect x="467.20" y="330.5" width="1.5" height="13"/>
<rect x="470.50" y="330.5" width="1.5" height="13"/>
<rect x="473.80" y="330.5" width="1.5" height="13"/>
<rect x="477.10" y="330.5" width="1.5" height="13"/>
<rect x="480.40" y="330.5" width="1.5" height="13"/>
<rect x="483.70" y="330.5" width="1.5" height="13"/>
<rect x="487.00" y="330.5" width="1.5" height="13"/>
<rect x="490.30" y="330.5" width="1.5" height="13"/>
<rect x="493.60" y="330.5" width="1.5" height="13"/>
<rect x="496.90" y="330.5" width="1.5" height="13"/>
<rect x="500.20" y="330.5" width="1.5" height="13"/>
<rect x="503.50" y="330.5" width="1.5" height="13"/>
<rect x="506.80" y="330.5" width="1.5" height="13"/>
<rect x="510.10" y="330.5" width="1.5" height="13"/>
<rect x="513.40" y="330.5" width="1.5" height="13"/>
<rect x="516.70" y="330.5" width="1.5" height="13"/>
<rect x="520.00" y="330.5" width="1.5" height="13"/>
<rect x="523.30" y="330.5" width="1.5" height="13"/>
<rect x="526.60" y="330.5" width="1.5" height="13"/>
<rect x="529.90" y="330.5" width="1.5" height="13"/>
<rect x="533.20" y="330.5" width="1.5" height="13"/>
<rect x="536.50" y="330.5" width="1.5" height="13"/>
<rect x="539.80" y="330.5" width="1.5" height="13"/>
<rect x="543.10" y="330.5" width="1.5" height="13"/>
<rect x="546.40" y="330.5" width="1.5" height="13"/>
<rect x="549.70" y="330.5" width="1.5" height="13"/>
<rect x="553.00" y="330.5" width="1.5" height="13"/>
<rect x="556.30" y="330.5" width="1.5" height="13"/>
<rect x="559.60" y="330.5" width="1.5" height="13"/>
<rect x="562.90" y="330.5" width="1.5" height="13"/>
<path d="M407 331.5H438M407 345H440" fill="none" stroke="#ff0000" stroke-width="1.0" stroke-linejoin="round"/>
<path d="M412 329c0-6 2-8 6-8h12c4 0 6 2 6 8" fill="none" stroke="#ff0000" stroke-width="1.1" stroke-linejoin="round"/>
<path d="M413 345v4h18v-4" fill="none" stroke="#ff0000" stroke-width="1.1" stroke-linejoin="round"/>
<path d="M429.5 331V323.9" fill="none" stroke="#ff0000" stroke-width="1.0" stroke-linejoin="round"/>
<path d="M434 331V322.9" fill="none" stroke="#ff0000" stroke-width="1.0" stroke-linejoin="round"/>
<path d="M440.5 331V325.9" fill="none" stroke="#ff0000" stroke-width="1.0" stroke-linejoin="round"/>
<path d="M444.5 331V322.4" fill="none" stroke="#ff0000" stroke-width="1.0" stroke-linejoin="round"/>
<path d="M448 331V325.2" fill="none" stroke="#ff0000" stroke-width="1.0" stroke-linejoin="round"/>
<path d="M452 331V324.2" fill="none" stroke="#ff0000" stroke-width="1.0" stroke-linejoin="round"/>
<path d="M456 331V322.3" fill="none" stroke="#ff0000" stroke-width="1.0" stroke-linejoin="round"/>
<path d="M461 331V325.0" fill="none" stroke="#ff0000" stroke-width="1.0" stroke-linejoin="round"/>
<path d="M466 331V322.2" fill="none" stroke="#ff0000" stroke-width="1.0" stroke-linejoin="round"/>
<path d="M470 331V324.6" fill="none" stroke="#ff0000" stroke-width="1.0" stroke-linejoin="round"/>
<path d="M476 331V322.4" fill="none" stroke="#ff0000" stroke-width="1.0" stroke-linejoin="round"/>
<path d="M480 331V322.5" fill="none" stroke="#ff0000" stroke-width="1.0" stroke-linejoin="round"/>
<path d="M484 331V324.5" fill="none" stroke="#ff0000" stroke-width="1.0" stroke-linejoin="round"/>
<path d="M491 331V327.0" fill="none" stroke="#ff0000" stroke-width="1.0" stroke-linejoin="round"/>
<path d="M498 331V322.7" fill="none" stroke="#ff0000" stroke-width="1.0" stroke-linejoin="round"/>
<path d="M424 345V354.7" fill="none" stroke="#ff0000" stroke-width="1.0" stroke-linejoin="round"/>
<path d="M434.5 345V359.5" fill="none" stroke="#ff0000" stroke-width="1.0" stroke-linejoin="round"/>
<path d="M446 345V363.4" fill="none" stroke="#ff0000" stroke-width="1.0" stroke-linejoin="round"/>
<path d="M451 345V358.9" fill="none" stroke="#ff0000" stroke-width="1.0" stroke-linejoin="round"/>
<path d="M447 345V362L441 368" fill="none" stroke="#ff0000" stroke-width="1.1" stroke-linejoin="round"/>
<path d="M438 345V364" fill="none" stroke="#ff0000" stroke-width="1.0" stroke-linejoin="round"/>
<path d="M452 345V356L457 364" fill="none" stroke="#ff0000" stroke-width="1.0" stroke-linejoin="round"/>
<path d="M490 345L497 352" fill="none" stroke="#ff0000" stroke-width="1.1" stroke-linejoin="round"/>
<path d="M513 345V352L520 358" fill="none" stroke="#ff0000" stroke-width="1.1" stroke-linejoin="round"/>
<path d="M495 345V356L484 362H478" fill="none" stroke="#ff0000" stroke-width="1.1" stroke-linejoin="round"/>
<circle cx="491.6" cy="303.0" r="2.2"/>
<circle cx="503.2" cy="303.0" r="2.2"/>
<circle cx="514.5" cy="303.0" r="2.2"/>
<circle cx="525.4" cy="303.0" r="2.2"/>
<circle cx="537.0" cy="303.0" r="2.2"/>
<circle cx="548.3" cy="303.0" r="2.2"/>
<circle cx="559.2" cy="303.0" r="2.2"/>
<circle cx="570.8" cy="303.0" r="2.2"/>
<path d="M491.6 303L534.0 325V331" fill="none" stroke="#ff0000" stroke-width="1.1" stroke-linejoin="round"/>
<path d="M503.2 303L538.3 325V331" fill="none" stroke="#ff0000" stroke-width="1.1" stroke-linejoin="round"/>
<path d="M514.5 303L542.6 325V331" fill="none" stroke="#ff0000" stroke-width="1.1" stroke-linejoin="round"/>
<path d="M525.4 303L546.9 325V331" fill="none" stroke="#ff0000" stroke-width="1.1" stroke-linejoin="round"/>
<path d="M537 303L551.2 325V331" fill="none" stroke="#ff0000" stroke-width="1.1" stroke-linejoin="round"/>
<path d="M548.3 303L555.5 325V331" fill="none" stroke="#ff0000" stroke-width="1.1" stroke-linejoin="round"/>
<path d="M559.2 303L559.8 325V331" fill="none" stroke="#ff0000" stroke-width="1.1" stroke-linejoin="round"/>
<path d="M570.8 303L564.1 325V331" fill="none" stroke="#ff0000" stroke-width="1.1" stroke-linejoin="round"/>
<path d="M491.6 303L496 298H515L537 318V331" fill="none" stroke="#ff0000" stroke-width="1.1" stroke-linejoin="round"/>
<path d="M557 331V300L560 295H630" fill="none" stroke="#ff0000" stroke-width="2.0" stroke-linejoin="round"/>
<path d="M630 295H726L730 300V305" fill="none" stroke="#ff0000" stroke-width="2.0" stroke-linejoin="round"/>
<rect x="566.8" y="309.4" width="12.0" height="14.2"/>
<circle cx="487.2" cy="319.3" r="2.2"/>
<circle cx="414.2" cy="346.5" r="2.2"/>
<circle cx="482.4" cy="346.5" r="2.2"/>
<circle cx="508.6" cy="346.5" r="2.2"/>
<circle cx="431.6" cy="364.0" r="2.2"/>
<circle cx="443.6" cy="364.0" r="2.2"/>
<circle cx="455.6" cy="364.0" r="2.2"/>
<circle cx="463.2" cy="361.6" r="2.2"/>
<circle cx="408.7" cy="370.5" r="2.2"/>
<circle cx="429.4" cy="370.5" r="2.2"/>
<circle cx="458.9" cy="370.5" r="2.2"/>
<circle cx="489.0" cy="370.5" r="2.2"/>
<circle cx="510.0" cy="364.0" r="2.2"/>
<circle cx="538.7" cy="364.0" r="2.2"/>
<circle cx="555.0" cy="364.0" r="2.2"/>
<circle cx="575.0" cy="364.0" r="2.2"/>
<circle cx="557.0" cy="373.0" r="2.2"/>
<circle cx="545.0" cy="369.0" r="2.2"/>
<rect x="506.9" y="356.3" width="8.7" height="12.0"/>
<path d="M503.9 362.3H518.6" fill="none" stroke="#ff0000" stroke-width="1.1" stroke-linejoin="round"/>
<rect x="526.5" y="356.3" width="7.6" height="12.0"/>
<path d="M523.5 362.3H537.1" fill="none" stroke="#ff0000" stroke-width="1.1" stroke-linejoin="round"/>
<rect x="547.2" y="356.3" width="7.7" height="12.0"/>
<path d="M544.2 362.3H557.9" fill="none" stroke="#ff0000" stroke-width="1.1" stroke-linejoin="round"/>
<rect x="565.8" y="356.3" width="8.7" height="12.0"/>
<path d="M562.8 362.3H577.5" fill="none" stroke="#ff0000" stroke-width="1.1" stroke-linejoin="round"/>
<path d="M532 345V354M548 345V356M566 345V356" fill="none" stroke="#ff0000" stroke-width="1.1" stroke-linejoin="round"/>
<path d="M545 368V385L553 393" fill="none" stroke="#ff0000" stroke-width="1.1" stroke-linejoin="round"/>
<path d="M533 368V380L541 388" fill="none" stroke="#ff0000" stroke-width="1.1" stroke-linejoin="round"/>
<path d="M568 368V378L575 385" fill="none" stroke="#ff0000" stroke-width="1.1" stroke-linejoin="round"/>
<path d="M589 318H611.6L614.6 321V356.5L611.6 359.5H589L586 356.5V321Z"/>
<g fill="#000"><rect x="589" y="326" width="11" height="12"/><rect x="603" y="326" width="10" height="12"/><rect x="589" y="340" width="11" height="12"/><rect x="603" y="340" width="10" height="12"/></g>
<rect x="590.0" y="327.0" width="9.0" height="10.0"/>
<rect x="604.0" y="327.0" width="8.0" height="10.0"/>
<rect x="590.0" y="341.0" width="9.0" height="10.0"/>
<rect x="604.0" y="341.0" width="8.0" height="10.0"/>
<rect x="617.0" y="307.4" width="7.5" height="4.3"/>
<rect x="617.0" y="317.0" width="7.5" height="4.5"/>
<rect x="617.0" y="325.0" width="7.5" height="5.0"/>
<rect x="617.0" y="335.0" width="7.5" height="4.5"/>
<circle cx="616.5" cy="302.4" r="2.2"/>
<circle cx="611.8" cy="309.8" r="2.2"/>
<circle cx="620.7" cy="343.4" r="2.2"/>
<circle cx="621.5" cy="356.5" r="2.2"/>
<circle cx="613.5" cy="368.0" r="2.2"/>
<circle cx="646.0" cy="373.0" r="2.2"/>
<circle cx="657.0" cy="356.5" r="2.2"/>
<circle cx="671.0" cy="350.7" r="2.2"/>
<circle cx="671.0" cy="358.0" r="2.2"/>
<circle cx="678.5" cy="305.6" r="2.2"/>
<circle cx="689.0" cy="310.0" r="2.2"/>
<circle cx="688.0" cy="363.0" r="2.2"/>
<circle cx="593.0" cy="368.0" r="2.2"/>
<path d="M602 360V372M596 362L590 378L576 380" fill="none" stroke="#ff0000" stroke-width="1.1" stroke-linejoin="round"/>
<path d="M608 360V375L600 383" fill="none" stroke="#ff0000" stroke-width="1.1" stroke-linejoin="round"/>
<path d="M630.7 299.7H667.5L672 304.2V349.7L667.5 354.2H630.7L626.2 349.7V304.2Z"/>
<path d="M757 299.7H805L810 304.7V349.6L805 354.6H757L752 349.6V304.7Z"/>
<rect x="676.3" y="319.4" width="13.7" height="22.6"/>
<path d="M683 342V357L688 363" fill="none" stroke="#ff0000" stroke-width="1.1" stroke-linejoin="round"/>
<path d="M683 319V309L688 304H700" fill="none" stroke="#ff0000" stroke-width="1.1" stroke-linejoin="round"/>
<g fill="none" stroke="#9a0000" stroke-width="1"><rect x="639.5" y="318.5" width="15" height="23"/><rect x="764" y="317" width="14" height="25"/><rect x="790" y="317" width="12" height="25"/></g>
<rect x="704.7" y="309.0" width="9.3" height="12.0"/>
<rect x="720.5" y="309.0" width="8.8" height="12.0"/>
<rect x="704.7" y="327.4" width="20.3" height="8.2"/>
<rect x="728.0" y="327.4" width="19.0" height="8.2"/>
<rect x="704.7" y="345.0" width="20.3" height="9.6"/>
<rect x="728.0" y="345.0" width="19.0" height="9.6"/>
<path d="M725 331.5H728M714 321V327M720 321V327" fill="none" stroke="#ff0000" stroke-width="1.2" stroke-linejoin="round"/>
<path d="M713 354.6V362H741V354.6" fill="none" stroke="#ff0000" stroke-width="1.3" stroke-linejoin="round"/>
<circle cx="734.0" cy="311.5" r="2.2"/>
<circle cx="741.0" cy="311.5" r="2.2"/>
<circle cx="748.0" cy="323.0" r="2.2"/>
<circle cx="723.5" cy="363.0" r="2.2"/>
<circle cx="755.0" cy="345.0" r="2.2"/>
<circle cx="757.0" cy="350.0" r="2.2"/>
<path d="M695 307c0-3 2-5 5-5h8" fill="none" stroke="#ff0000" stroke-width="1.1" stroke-linejoin="round"/>
<rect x="822.4" y="334.0" width="18.0" height="8.0"/>
<rect x="850.2" y="334.0" width="18.0" height="8.0"/>
<rect x="822.4" y="353.6" width="18.0" height="8.2"/>
<rect x="850.2" y="353.6" width="18.0" height="8.2"/>
<rect x="822.0" y="318.0" width="7.0" height="9.0"/>
<rect x="840.0" y="318.0" width="8.0" height="9.0"/>
<path d="M831 342V353.6M859 342V353.6M825 327V334M844 327L836 334" fill="none" stroke="#ff0000" stroke-width="1.3" stroke-linejoin="round"/>
<path d="M818 334V365L823 369M832 326L838 320H852L860 330" fill="none" stroke="#ff0000" stroke-width="1.2" stroke-linejoin="round"/>
<circle cx="822.4" cy="368.0" r="2.2"/>
<circle cx="855.0" cy="366.0" r="2.2"/>
<circle cx="817.0" cy="330.0" r="2.2"/>
<circle cx="818.0" cy="338.0" r="2.2"/>
<circle cx="812.0" cy="345.0" r="2.2"/>
<path d="M810 330H818" fill="none" stroke="#ff0000" stroke-width="1.1" stroke-linejoin="round"/>
<path d="M672 304L676 300M690 304L695 300" fill="none" stroke="#ff0000" stroke-width="1.0" stroke-linejoin="round"/>
<rect x="710.0" y="381.0" width="7.5" height="2"/>
<circle cx="710.5" cy="382.0" r="1.3"/>
<circle cx="717.0" cy="382.0" r="1.3"/>
<rect x="720.5" y="381.0" width="7.5" height="2"/>
<circle cx="721.0" cy="382.0" r="1.3"/>
<circle cx="727.5" cy="382.0" r="1.3"/>
<rect x="736.0" y="381.0" width="7.5" height="2"/>
<circle cx="736.5" cy="382.0" r="1.3"/>
<circle cx="743.0" cy="382.0" r="1.3"/>
<rect x="746.5" y="381.0" width="7.5" height="2"/>
<circle cx="747.0" cy="382.0" r="1.3"/>
<circle cx="753.5" cy="382.0" r="1.3"/>
<rect x="710.0" y="387.3" width="7.5" height="2"/>
<circle cx="710.5" cy="388.3" r="1.3"/>
<circle cx="717.0" cy="388.3" r="1.3"/>
<rect x="720.5" y="387.3" width="7.5" height="2"/>
<circle cx="721.0" cy="388.3" r="1.3"/>
<circle cx="727.5" cy="388.3" r="1.3"/>
<rect x="736.0" y="387.3" width="7.5" height="2"/>
<circle cx="736.5" cy="388.3" r="1.3"/>
<circle cx="743.0" cy="388.3" r="1.3"/>
<rect x="746.5" y="387.3" width="7.5" height="2"/>
<circle cx="747.0" cy="388.3" r="1.3"/>
<circle cx="753.5" cy="388.3" r="1.3"/>
<rect x="710.0" y="393.6" width="7.5" height="2"/>
<circle cx="710.5" cy="394.6" r="1.3"/>
<circle cx="717.0" cy="394.6" r="1.3"/>
<rect x="720.5" y="393.6" width="7.5" height="2"/>
<circle cx="721.0" cy="394.6" r="1.3"/>
<circle cx="727.5" cy="394.6" r="1.3"/>
<rect x="736.0" y="393.6" width="7.5" height="2"/>
<circle cx="736.5" cy="394.6" r="1.3"/>
<circle cx="743.0" cy="394.6" r="1.3"/>
<rect x="746.5" y="393.6" width="7.5" height="2"/>
<circle cx="747.0" cy="394.6" r="1.3"/>
<circle cx="753.5" cy="394.6" r="1.3"/>
<rect x="710.0" y="399.9" width="7.5" height="2"/>
<circle cx="710.5" cy="400.9" r="1.3"/>
<circle cx="717.0" cy="400.9" r="1.3"/>
<rect x="720.5" y="399.9" width="7.5" height="2"/>
<circle cx="721.0" cy="400.9" r="1.3"/>
<circle cx="727.5" cy="400.9" r="1.3"/>
<rect x="736.0" y="399.9" width="7.5" height="2"/>
<circle cx="736.5" cy="400.9" r="1.3"/>
<circle cx="743.0" cy="400.9" r="1.3"/>
<rect x="746.5" y="399.9" width="7.5" height="2"/>
<circle cx="747.0" cy="400.9" r="1.3"/>
<circle cx="753.5" cy="400.9" r="1.3"/>
<rect x="710.0" y="406.2" width="7.5" height="2"/>
<circle cx="710.5" cy="407.2" r="1.3"/>
<circle cx="717.0" cy="407.2" r="1.3"/>
<rect x="720.5" y="406.2" width="7.5" height="2"/>
<circle cx="721.0" cy="407.2" r="1.3"/>
<circle cx="727.5" cy="407.2" r="1.3"/>
<rect x="736.0" y="406.2" width="7.5" height="2"/>
<circle cx="736.5" cy="407.2" r="1.3"/>
<circle cx="743.0" cy="407.2" r="1.3"/>
<rect x="746.5" y="406.2" width="7.5" height="2"/>
<circle cx="747.0" cy="407.2" r="1.3"/>
<circle cx="753.5" cy="407.2" r="1.3"/>
<rect x="710.0" y="412.5" width="7.5" height="2"/>
<circle cx="710.5" cy="413.5" r="1.3"/>
<circle cx="717.0" cy="413.5" r="1.3"/>
<path d="M720.0 415.5L727.0 410.5" fill="none" stroke="#ff0000" stroke-width="1.7" stroke-linejoin="round"/>
<circle cx="721.0" cy="413.5" r="1.3"/>
<circle cx="727.5" cy="413.5" r="1.3"/>
<path d="M735.5 415.5L742.5 410.5" fill="none" stroke="#ff0000" stroke-width="1.7" stroke-linejoin="round"/>
<circle cx="736.5" cy="413.5" r="1.3"/>
<circle cx="743.0" cy="413.5" r="1.3"/>
<rect x="746.5" y="412.5" width="7.5" height="2"/>
<circle cx="747.0" cy="413.5" r="1.3"/>
<circle cx="753.5" cy="413.5" r="1.3"/>
<rect x="710.0" y="418.8" width="7.5" height="2"/>
<circle cx="710.5" cy="419.8" r="1.3"/>
<circle cx="717.0" cy="419.8" r="1.3"/>
<path d="M720.0 421.8L727.0 416.8" fill="none" stroke="#ff0000" stroke-width="1.7" stroke-linejoin="round"/>
<circle cx="721.0" cy="419.8" r="1.3"/>
<circle cx="727.5" cy="419.8" r="1.3"/>
<rect x="736.0" y="418.8" width="7.5" height="2"/>
<circle cx="736.5" cy="419.8" r="1.3"/>
<circle cx="743.0" cy="419.8" r="1.3"/>
<rect x="746.5" y="418.8" width="7.5" height="2"/>
<circle cx="747.0" cy="419.8" r="1.3"/>
<circle cx="753.5" cy="419.8" r="1.3"/>
<rect x="710.0" y="425.1" width="7.5" height="2"/>
<circle cx="710.5" cy="426.1" r="1.3"/>
<circle cx="717.0" cy="426.1" r="1.3"/>
<rect x="720.5" y="425.1" width="7.5" height="2"/>
<circle cx="721.0" cy="426.1" r="1.3"/>
<circle cx="727.5" cy="426.1" r="1.3"/>
<path d="M735.5 428.1L742.5 423.1" fill="none" stroke="#ff0000" stroke-width="1.7" stroke-linejoin="round"/>
<circle cx="736.5" cy="426.1" r="1.3"/>
<circle cx="743.0" cy="426.1" r="1.3"/>
<rect x="746.5" y="425.1" width="7.5" height="2"/>
<circle cx="747.0" cy="426.1" r="1.3"/>
<circle cx="753.5" cy="426.1" r="1.3"/>
<path d="M709.5 434.4L716.5 429.4" fill="none" stroke="#ff0000" stroke-width="1.7" stroke-linejoin="round"/>
<circle cx="710.5" cy="432.4" r="1.3"/>
<circle cx="717.0" cy="432.4" r="1.3"/>
<path d="M720.0 434.4L727.0 429.4" fill="none" stroke="#ff0000" stroke-width="1.7" stroke-linejoin="round"/>
<circle cx="721.0" cy="432.4" r="1.3"/>
<circle cx="727.5" cy="432.4" r="1.3"/>
<rect x="736.0" y="431.4" width="7.5" height="2"/>
<circle cx="736.5" cy="432.4" r="1.3"/>
<circle cx="743.0" cy="432.4" r="1.3"/>
<path d="M746.0 434.4L753.0 429.4" fill="none" stroke="#ff0000" stroke-width="1.7" stroke-linejoin="round"/>
<circle cx="747.0" cy="432.4" r="1.3"/>
<circle cx="753.5" cy="432.4" r="1.3"/>
<path d="M709.5 440.7L716.5 435.7" fill="none" stroke="#ff0000" stroke-width="1.7" stroke-linejoin="round"/>
<circle cx="710.5" cy="438.7" r="1.3"/>
<circle cx="717.0" cy="438.7" r="1.3"/>
<path d="M720.0 440.7L727.0 435.7" fill="none" stroke="#ff0000" stroke-width="1.7" stroke-linejoin="round"/>
<circle cx="721.0" cy="438.7" r="1.3"/>
<circle cx="727.5" cy="438.7" r="1.3"/>
<rect x="736.0" y="437.7" width="7.5" height="2"/>
<circle cx="736.5" cy="438.7" r="1.3"/>
<circle cx="743.0" cy="438.7" r="1.3"/>
<rect x="746.5" y="437.7" width="7.5" height="2"/>
<circle cx="747.0" cy="438.7" r="1.3"/>
<circle cx="753.5" cy="438.7" r="1.3"/>
<rect x="710.0" y="444.0" width="7.5" height="2"/>
<circle cx="710.5" cy="445.0" r="1.3"/>
<circle cx="717.0" cy="445.0" r="1.3"/>
<rect x="720.5" y="444.0" width="7.5" height="2"/>
<circle cx="721.0" cy="445.0" r="1.3"/>
<circle cx="727.5" cy="445.0" r="1.3"/>
<path d="M735.5 447.0L742.5 442.0" fill="none" stroke="#ff0000" stroke-width="1.7" stroke-linejoin="round"/>
<circle cx="736.5" cy="445.0" r="1.3"/>
<circle cx="743.0" cy="445.0" r="1.3"/>
<rect x="746.5" y="444.0" width="7.5" height="2"/>
<circle cx="747.0" cy="445.0" r="1.3"/>
<circle cx="753.5" cy="445.0" r="1.3"/>
<rect x="710.0" y="450.3" width="7.5" height="2"/>
<circle cx="710.5" cy="451.3" r="1.3"/>
<circle cx="717.0" cy="451.3" r="1.3"/>
<rect x="720.5" y="450.3" width="7.5" height="2"/>
<circle cx="721.0" cy="451.3" r="1.3"/>
<circle cx="727.5" cy="451.3" r="1.3"/>
<path d="M735.5 453.3L742.5 448.3" fill="none" stroke="#ff0000" stroke-width="1.7" stroke-linejoin="round"/>
<circle cx="736.5" cy="451.3" r="1.3"/>
<circle cx="743.0" cy="451.3" r="1.3"/>
<rect x="746.5" y="450.3" width="7.5" height="2"/>
<circle cx="747.0" cy="451.3" r="1.3"/>
<circle cx="753.5" cy="451.3" r="1.3"/>
<rect x="794.0" y="381.0" width="7.5" height="2"/>
<circle cx="794.5" cy="382.0" r="1.3"/>
<circle cx="801.0" cy="382.0" r="1.3"/>
<rect x="804.5" y="381.0" width="7.5" height="2"/>
<circle cx="805.0" cy="382.0" r="1.3"/>
<circle cx="811.5" cy="382.0" r="1.3"/>
<rect x="820.0" y="381.0" width="7.5" height="2"/>
<circle cx="820.5" cy="382.0" r="1.3"/>
<circle cx="827.0" cy="382.0" r="1.3"/>
<rect x="830.5" y="381.0" width="7.5" height="2"/>
<circle cx="831.0" cy="382.0" r="1.3"/>
<circle cx="837.5" cy="382.0" r="1.3"/>
<rect x="794.0" y="387.3" width="7.5" height="2"/>
<circle cx="794.5" cy="388.3" r="1.3"/>
<circle cx="801.0" cy="388.3" r="1.3"/>
<rect x="804.5" y="387.3" width="7.5" height="2"/>
<circle cx="805.0" cy="388.3" r="1.3"/>
<circle cx="811.5" cy="388.3" r="1.3"/>
<rect x="820.0" y="387.3" width="7.5" height="2"/>
<circle cx="820.5" cy="388.3" r="1.3"/>
<circle cx="827.0" cy="388.3" r="1.3"/>
<rect x="830.5" y="387.3" width="7.5" height="2"/>
<circle cx="831.0" cy="388.3" r="1.3"/>
<circle cx="837.5" cy="388.3" r="1.3"/>
<rect x="794.0" y="393.6" width="7.5" height="2"/>
<circle cx="794.5" cy="394.6" r="1.3"/>
<circle cx="801.0" cy="394.6" r="1.3"/>
<rect x="804.5" y="393.6" width="7.5" height="2"/>
<circle cx="805.0" cy="394.6" r="1.3"/>
<circle cx="811.5" cy="394.6" r="1.3"/>
<rect x="820.0" y="393.6" width="7.5" height="2"/>
<circle cx="820.5" cy="394.6" r="1.3"/>
<circle cx="827.0" cy="394.6" r="1.3"/>
<rect x="830.5" y="393.6" width="7.5" height="2"/>
<circle cx="831.0" cy="394.6" r="1.3"/>
<circle cx="837.5" cy="394.6" r="1.3"/>
<rect x="794.0" y="399.9" width="7.5" height="2"/>
<circle cx="794.5" cy="400.9" r="1.3"/>
<circle cx="801.0" cy="400.9" r="1.3"/>
<rect x="804.5" y="399.9" width="7.5" height="2"/>
<circle cx="805.0" cy="400.9" r="1.3"/>
<circle cx="811.5" cy="400.9" r="1.3"/>
<rect x="820.0" y="399.9" width="7.5" height="2"/>
<circle cx="820.5" cy="400.9" r="1.3"/>
<circle cx="827.0" cy="400.9" r="1.3"/>
<rect x="830.5" y="399.9" width="7.5" height="2"/>
<circle cx="831.0" cy="400.9" r="1.3"/>
<circle cx="837.5" cy="400.9" r="1.3"/>
<rect x="794.0" y="406.2" width="7.5" height="2"/>
<circle cx="794.5" cy="407.2" r="1.3"/>
<circle cx="801.0" cy="407.2" r="1.3"/>
<rect x="804.5" y="406.2" width="7.5" height="2"/>
<circle cx="805.0" cy="407.2" r="1.3"/>
<circle cx="811.5" cy="407.2" r="1.3"/>
<rect x="820.0" y="406.2" width="7.5" height="2"/>
<circle cx="820.5" cy="407.2" r="1.3"/>
<circle cx="827.0" cy="407.2" r="1.3"/>
<rect x="830.5" y="406.2" width="7.5" height="2"/>
<circle cx="831.0" cy="407.2" r="1.3"/>
<circle cx="837.5" cy="407.2" r="1.3"/>
<rect x="794.0" y="412.5" width="7.5" height="2"/>
<circle cx="794.5" cy="413.5" r="1.3"/>
<circle cx="801.0" cy="413.5" r="1.3"/>
<path d="M804.0 415.5L811.0 410.5" fill="none" stroke="#ff0000" stroke-width="1.7" stroke-linejoin="round"/>
<circle cx="805.0" cy="413.5" r="1.3"/>
<circle cx="811.5" cy="413.5" r="1.3"/>
<path d="M819.5 415.5L826.5 410.5" fill="none" stroke="#ff0000" stroke-width="1.7" stroke-linejoin="round"/>
<circle cx="820.5" cy="413.5" r="1.3"/>
<circle cx="827.0" cy="413.5" r="1.3"/>
<rect x="830.5" y="412.5" width="7.5" height="2"/>
<circle cx="831.0" cy="413.5" r="1.3"/>
<circle cx="837.5" cy="413.5" r="1.3"/>
<rect x="794.0" y="418.8" width="7.5" height="2"/>
<circle cx="794.5" cy="419.8" r="1.3"/>
<circle cx="801.0" cy="419.8" r="1.3"/>
<rect x="804.5" y="418.8" width="7.5" height="2"/>
<circle cx="805.0" cy="419.8" r="1.3"/>
<circle cx="811.5" cy="419.8" r="1.3"/>
<rect x="820.0" y="418.8" width="7.5" height="2"/>
<circle cx="820.5" cy="419.8" r="1.3"/>
<circle cx="827.0" cy="419.8" r="1.3"/>
<path d="M830.0 421.8L837.0 416.8" fill="none" stroke="#ff0000" stroke-width="1.7" stroke-linejoin="round"/>
<circle cx="831.0" cy="419.8" r="1.3"/>
<circle cx="837.5" cy="419.8" r="1.3"/>
<path d="M793.5 428.1L800.5 423.1" fill="none" stroke="#ff0000" stroke-width="1.7" stroke-linejoin="round"/>
<circle cx="794.5" cy="426.1" r="1.3"/>
<circle cx="801.0" cy="426.1" r="1.3"/>
<path d="M804.0 428.1L811.0 423.1" fill="none" stroke="#ff0000" stroke-width="1.7" stroke-linejoin="round"/>
<circle cx="805.0" cy="426.1" r="1.3"/>
<circle cx="811.5" cy="426.1" r="1.3"/>
<rect x="820.0" y="425.1" width="7.5" height="2"/>
<circle cx="820.5" cy="426.1" r="1.3"/>
<circle cx="827.0" cy="426.1" r="1.3"/>
<rect x="830.5" y="425.1" width="7.5" height="2"/>
<circle cx="831.0" cy="426.1" r="1.3"/>
<circle cx="837.5" cy="426.1" r="1.3"/>
<path d="M793.5 434.4L800.5 429.4" fill="none" stroke="#ff0000" stroke-width="1.7" stroke-linejoin="round"/>
<circle cx="794.5" cy="432.4" r="1.3"/>
<circle cx="801.0" cy="432.4" r="1.3"/>
<path d="M804.0 434.4L811.0 429.4" fill="none" stroke="#ff0000" stroke-width="1.7" stroke-linejoin="round"/>
<circle cx="805.0" cy="432.4" r="1.3"/>
<circle cx="811.5" cy="432.4" r="1.3"/>
<path d="M819.5 434.4L826.5 429.4" fill="none" stroke="#ff0000" stroke-width="1.7" stroke-linejoin="round"/>
<circle cx="820.5" cy="432.4" r="1.3"/>
<circle cx="827.0" cy="432.4" r="1.3"/>
<path d="M830.0 434.4L837.0 429.4" fill="none" stroke="#ff0000" stroke-width="1.7" stroke-linejoin="round"/>
<circle cx="831.0" cy="432.4" r="1.3"/>
<circle cx="837.5" cy="432.4" r="1.3"/>
<path d="M793.5 440.7L800.5 435.7" fill="none" stroke="#ff0000" stroke-width="1.7" stroke-linejoin="round"/>
<circle cx="794.5" cy="438.7" r="1.3"/>
<circle cx="801.0" cy="438.7" r="1.3"/>
<rect x="804.5" y="437.7" width="7.5" height="2"/>
<circle cx="805.0" cy="438.7" r="1.3"/>
<circle cx="811.5" cy="438.7" r="1.3"/>
<path d="M819.5 440.7L826.5 435.7" fill="none" stroke="#ff0000" stroke-width="1.7" stroke-linejoin="round"/>
<circle cx="820.5" cy="438.7" r="1.3"/>
<circle cx="827.0" cy="438.7" r="1.3"/>
<path d="M830.0 440.7L837.0 435.7" fill="none" stroke="#ff0000" stroke-width="1.7" stroke-linejoin="round"/>
<circle cx="831.0" cy="438.7" r="1.3"/>
<circle cx="837.5" cy="438.7" r="1.3"/>
<path d="M793.5 447.0L800.5 442.0" fill="none" stroke="#ff0000" stroke-width="1.7" stroke-linejoin="round"/>
<circle cx="794.5" cy="445.0" r="1.3"/>
<circle cx="801.0" cy="445.0" r="1.3"/>
<path d="M804.0 447.0L811.0 442.0" fill="none" stroke="#ff0000" stroke-width="1.7" stroke-linejoin="round"/>
<circle cx="805.0" cy="445.0" r="1.3"/>
<circle cx="811.5" cy="445.0" r="1.3"/>
<rect x="820.0" y="444.0" width="7.5" height="2"/>
<circle cx="820.5" cy="445.0" r="1.3"/>
<circle cx="827.0" cy="445.0" r="1.3"/>
<rect x="830.5" y="444.0" width="7.5" height="2"/>
<circle cx="831.0" cy="445.0" r="1.3"/>
<circle cx="837.5" cy="445.0" r="1.3"/>
<rect x="794.0" y="450.3" width="7.5" height="2"/>
<circle cx="794.5" cy="451.3" r="1.3"/>
<circle cx="801.0" cy="451.3" r="1.3"/>
<rect x="804.5" y="450.3" width="7.5" height="2"/>
<circle cx="805.0" cy="451.3" r="1.3"/>
<circle cx="811.5" cy="451.3" r="1.3"/>
<rect x="820.0" y="450.3" width="7.5" height="2"/>
<circle cx="820.5" cy="451.3" r="1.3"/>
<circle cx="827.0" cy="451.3" r="1.3"/>
<rect x="830.5" y="450.3" width="7.5" height="2"/>
<circle cx="831.0" cy="451.3" r="1.3"/>
<circle cx="837.5" cy="451.3" r="1.3"/>
<rect x="791.5" y="488.0" width="7.5" height="2"/>
<circle cx="792.0" cy="489.0" r="1.3"/>
<circle cx="798.5" cy="489.0" r="1.3"/>
<rect x="802.0" y="488.0" width="7.5" height="2"/>
<circle cx="802.5" cy="489.0" r="1.3"/>
<circle cx="809.0" cy="489.0" r="1.3"/>
<rect x="817.5" y="488.0" width="7.5" height="2"/>
<circle cx="818.0" cy="489.0" r="1.3"/>
<circle cx="824.5" cy="489.0" r="1.3"/>
<rect x="828.0" y="488.0" width="7.5" height="2"/>
<circle cx="828.5" cy="489.0" r="1.3"/>
<circle cx="835.0" cy="489.0" r="1.3"/>
<rect x="791.5" y="494.6" width="7.5" height="2"/>
<circle cx="792.0" cy="495.6" r="1.3"/>
<circle cx="798.5" cy="495.6" r="1.3"/>
<rect x="802.0" y="494.6" width="7.5" height="2"/>
<circle cx="802.5" cy="495.6" r="1.3"/>
<circle cx="809.0" cy="495.6" r="1.3"/>
<rect x="817.5" y="494.6" width="7.5" height="2"/>
<circle cx="818.0" cy="495.6" r="1.3"/>
<circle cx="824.5" cy="495.6" r="1.3"/>
<rect x="828.0" y="494.6" width="7.5" height="2"/>
<circle cx="828.5" cy="495.6" r="1.3"/>
<circle cx="835.0" cy="495.6" r="1.3"/>
<rect x="791.5" y="501.2" width="7.5" height="2"/>
<circle cx="792.0" cy="502.2" r="1.3"/>
<circle cx="798.5" cy="502.2" r="1.3"/>
<rect x="802.0" y="501.2" width="7.5" height="2"/>
<circle cx="802.5" cy="502.2" r="1.3"/>
<circle cx="809.0" cy="502.2" r="1.3"/>
<rect x="817.5" y="501.2" width="7.5" height="2"/>
<circle cx="818.0" cy="502.2" r="1.3"/>
<circle cx="824.5" cy="502.2" r="1.3"/>
<rect x="828.0" y="501.2" width="7.5" height="2"/>
<circle cx="828.5" cy="502.2" r="1.3"/>
<circle cx="835.0" cy="502.2" r="1.3"/>
<rect x="791.5" y="507.8" width="7.5" height="2"/>
<circle cx="792.0" cy="508.8" r="1.3"/>
<circle cx="798.5" cy="508.8" r="1.3"/>
<rect x="802.0" y="507.8" width="7.5" height="2"/>
<circle cx="802.5" cy="508.8" r="1.3"/>
<circle cx="809.0" cy="508.8" r="1.3"/>
<rect x="817.5" y="507.8" width="7.5" height="2"/>
<circle cx="818.0" cy="508.8" r="1.3"/>
<circle cx="824.5" cy="508.8" r="1.3"/>
<rect x="828.0" y="507.8" width="7.5" height="2"/>
<circle cx="828.5" cy="508.8" r="1.3"/>
<circle cx="835.0" cy="508.8" r="1.3"/>
<rect x="791.5" y="514.4" width="7.5" height="2"/>
<circle cx="792.0" cy="515.4" r="1.3"/>
<circle cx="798.5" cy="515.4" r="1.3"/>
<rect x="802.0" y="514.4" width="7.5" height="2"/>
<circle cx="802.5" cy="515.4" r="1.3"/>
<circle cx="809.0" cy="515.4" r="1.3"/>
<rect x="817.5" y="514.4" width="7.5" height="2"/>
<circle cx="818.0" cy="515.4" r="1.3"/>
<circle cx="824.5" cy="515.4" r="1.3"/>
<rect x="828.0" y="514.4" width="7.5" height="2"/>
<circle cx="828.5" cy="515.4" r="1.3"/>
<circle cx="835.0" cy="515.4" r="1.3"/>
<rect x="791.5" y="521.0" width="7.5" height="2"/>
<circle cx="792.0" cy="522.0" r="1.3"/>
<circle cx="798.5" cy="522.0" r="1.3"/>
<rect x="802.0" y="521.0" width="7.5" height="2"/>
<circle cx="802.5" cy="522.0" r="1.3"/>
<circle cx="809.0" cy="522.0" r="1.3"/>
<path d="M817.0 524.0L824.0 519.0" fill="none" stroke="#ff0000" stroke-width="1.7" stroke-linejoin="round"/>
<circle cx="818.0" cy="522.0" r="1.3"/>
<circle cx="824.5" cy="522.0" r="1.3"/>
<path d="M827.5 524.0L834.5 519.0" fill="none" stroke="#ff0000" stroke-width="1.7" stroke-linejoin="round"/>
<circle cx="828.5" cy="522.0" r="1.3"/>
<circle cx="835.0" cy="522.0" r="1.3"/>
<path d="M791.0 530.6L798.0 525.6" fill="none" stroke="#ff0000" stroke-width="1.7" stroke-linejoin="round"/>
<circle cx="792.0" cy="528.6" r="1.3"/>
<circle cx="798.5" cy="528.6" r="1.3"/>
<path d="M801.5 530.6L808.5 525.6" fill="none" stroke="#ff0000" stroke-width="1.7" stroke-linejoin="round"/>
<circle cx="802.5" cy="528.6" r="1.3"/>
<circle cx="809.0" cy="528.6" r="1.3"/>
<path d="M817.0 530.6L824.0 525.6" fill="none" stroke="#ff0000" stroke-width="1.7" stroke-linejoin="round"/>
<circle cx="818.0" cy="528.6" r="1.3"/>
<circle cx="824.5" cy="528.6" r="1.3"/>
<rect x="828.0" y="527.6" width="7.5" height="2"/>
<circle cx="828.5" cy="528.6" r="1.3"/>
<circle cx="835.0" cy="528.6" r="1.3"/>
<rect x="791.5" y="534.2" width="7.5" height="2"/>
<circle cx="792.0" cy="535.2" r="1.3"/>
<circle cx="798.5" cy="535.2" r="1.3"/>
<path d="M801.5 537.2L808.5 532.2" fill="none" stroke="#ff0000" stroke-width="1.7" stroke-linejoin="round"/>
<circle cx="802.5" cy="535.2" r="1.3"/>
<circle cx="809.0" cy="535.2" r="1.3"/>
<path d="M817.0 537.2L824.0 532.2" fill="none" stroke="#ff0000" stroke-width="1.7" stroke-linejoin="round"/>
<circle cx="818.0" cy="535.2" r="1.3"/>
<circle cx="824.5" cy="535.2" r="1.3"/>
<path d="M827.5 537.2L834.5 532.2" fill="none" stroke="#ff0000" stroke-width="1.7" stroke-linejoin="round"/>
<circle cx="828.5" cy="535.2" r="1.3"/>
<circle cx="835.0" cy="535.2" r="1.3"/>
<path d="M791.0 543.8L798.0 538.8" fill="none" stroke="#ff0000" stroke-width="1.7" stroke-linejoin="round"/>
<circle cx="792.0" cy="541.8" r="1.3"/>
<circle cx="798.5" cy="541.8" r="1.3"/>
<path d="M801.5 543.8L808.5 538.8" fill="none" stroke="#ff0000" stroke-width="1.7" stroke-linejoin="round"/>
<circle cx="802.5" cy="541.8" r="1.3"/>
<circle cx="809.0" cy="541.8" r="1.3"/>
<path d="M817.0 543.8L824.0 538.8" fill="none" stroke="#ff0000" stroke-width="1.7" stroke-linejoin="round"/>
<circle cx="818.0" cy="541.8" r="1.3"/>
<circle cx="824.5" cy="541.8" r="1.3"/>
<rect x="828.0" y="540.8" width="7.5" height="2"/>
<circle cx="828.5" cy="541.8" r="1.3"/>
<circle cx="835.0" cy="541.8" r="1.3"/>
<path d="M791.0 550.4L798.0 545.4" fill="none" stroke="#ff0000" stroke-width="1.7" stroke-linejoin="round"/>
<circle cx="792.0" cy="548.4" r="1.3"/>
<circle cx="798.5" cy="548.4" r="1.3"/>
<path d="M801.5 550.4L808.5 545.4" fill="none" stroke="#ff0000" stroke-width="1.7" stroke-linejoin="round"/>
<circle cx="802.5" cy="548.4" r="1.3"/>
<circle cx="809.0" cy="548.4" r="1.3"/>
<rect x="817.5" y="547.4" width="7.5" height="2"/>
<circle cx="818.0" cy="548.4" r="1.3"/>
<circle cx="824.5" cy="548.4" r="1.3"/>
<rect x="828.0" y="547.4" width="7.5" height="2"/>
<circle cx="828.5" cy="548.4" r="1.3"/>
<circle cx="835.0" cy="548.4" r="1.3"/>
<path d="M791.0 557.0L798.0 552.0" fill="none" stroke="#ff0000" stroke-width="1.7" stroke-linejoin="round"/>
<circle cx="792.0" cy="555.0" r="1.3"/>
<circle cx="798.5" cy="555.0" r="1.3"/>
<rect x="802.0" y="554.0" width="7.5" height="2"/>
<circle cx="802.5" cy="555.0" r="1.3"/>
<circle cx="809.0" cy="555.0" r="1.3"/>
<path d="M817.0 557.0L824.0 552.0" fill="none" stroke="#ff0000" stroke-width="1.7" stroke-linejoin="round"/>
<circle cx="818.0" cy="555.0" r="1.3"/>
<circle cx="824.5" cy="555.0" r="1.3"/>
<rect x="828.0" y="554.0" width="7.5" height="2"/>
<circle cx="828.5" cy="555.0" r="1.3"/>
<circle cx="835.0" cy="555.0" r="1.3"/>
<path d="M709 452L704 458M742 452V460L738 464M752 449H758V455" fill="none" stroke="#ff0000" stroke-width="1.5" stroke-linejoin="round"/>
<path d="M838 452H845V458" fill="none" stroke="#ff0000" stroke-width="1.5" stroke-linejoin="round"/>
<circle cx="705.0" cy="380.0" r="2.2"/>
<circle cx="760.0" cy="380.0" r="2.2"/>
<circle cx="700.0" cy="454.0" r="2.2"/>
<circle cx="790.0" cy="380.0" r="2.2"/>
<circle cx="844.0" cy="380.0" r="2.2"/>
<circle cx="785.0" cy="475.0" r="2.2"/>
<circle cx="802.0" cy="475.0" r="2.2"/>
<circle cx="818.0" cy="475.0" r="2.2"/>
<circle cx="849.0" cy="475.0" r="2.2"/>
<circle cx="786.7" cy="484.0" r="2.2"/>
<circle cx="825.0" cy="481.7" r="2.2"/>
<circle cx="849.0" cy="484.0" r="2.2"/>
<circle cx="788.0" cy="558.0" r="2.2"/>
<circle cx="829.0" cy="558.0" r="2.2"/>
<path d="M850 560V553H843" fill="none" stroke="#ff0000" stroke-width="1.5" stroke-linejoin="round"/>
<rect x="863.0" y="388.0" width="5.0" height="8.0"/>
<rect x="873.0" y="388.0" width="4.7" height="8.0"/>
<rect x="863.0" y="398.0" width="5.0" height="7.7"/>
<rect x="873.0" y="398.0" width="4.7" height="7.7"/>
<rect x="863.0" y="418.0" width="5.0" height="8.0"/>
<rect x="873.0" y="418.0" width="4.7" height="8.0"/>
<rect x="863.0" y="429.0" width="5.0" height="8.0"/>
<rect x="873.0" y="429.0" width="4.7" height="8.0"/>
<path d="M858 401.8H863M858 421H863M865.5 396V398M865.5 426V429" fill="none" stroke="#ff0000" stroke-width="1.3" stroke-linejoin="round"/>
<path d="M873.6 379.2V388M877.7 401c3 0 5 3 5 6v8c0 3-2 6-5 6M875 437V446.6" fill="none" stroke="#ff0000" stroke-width="1.4" stroke-linejoin="round"/>
<circle cx="873.6" cy="379.2" r="2.3"/>
<circle cx="881.7" cy="412.6" r="2.3"/>
<circle cx="873.6" cy="446.6" r="2.3"/>
<rect x="863.0" y="495.0" width="5.0" height="8.0"/>
<rect x="873.0" y="495.0" width="4.7" height="8.0"/>
<rect x="863.0" y="505.0" width="5.0" height="7.7"/>
<rect x="873.0" y="505.0" width="4.7" height="7.7"/>
<rect x="863.0" y="525.0" width="5.0" height="8.0"/>
<rect x="873.0" y="525.0" width="4.7" height="8.0"/>
<rect x="863.0" y="536.0" width="5.0" height="8.0"/>
<rect x="873.0" y="536.0" width="4.7" height="8.0"/>
<path d="M858 508.8H863M858 528H863M865.5 503V505M865.5 533V536" fill="none" stroke="#ff0000" stroke-width="1.3" stroke-linejoin="round"/>
<path d="M873.6 486.2V495M877.7 508c3 0 5 3 5 6v8c0 3-2 6-5 6M875 544V553.6" fill="none" stroke="#ff0000" stroke-width="1.4" stroke-linejoin="round"/>
<circle cx="873.6" cy="486.2" r="2.3"/>
<circle cx="881.7" cy="519.6" r="2.3"/>
<circle cx="873.6" cy="553.6" r="2.3"/>
<circle cx="849.1" cy="379.2" r="2.2"/>
<circle cx="854.0" cy="388.6" r="2.2"/>
<circle cx="859.6" cy="412.6" r="2.2"/>
<circle cx="859.2" cy="427.5" r="2.2"/>
<circle cx="853.7" cy="437.7" r="2.2"/>
<circle cx="849.0" cy="475.0" r="2.2"/>
<circle cx="849.5" cy="484.0" r="2.2"/>
<circle cx="861.0" cy="489.7" r="2.2"/>
<circle cx="859.6" cy="514.5" r="2.2"/>
<circle cx="861.0" cy="553.7" r="2.2"/>
<rect x="782.0" y="577.0" width="6.0" height="8.0"/>
<rect x="792.0" y="577.0" width="5.0" height="8.0"/>
<rect x="826.0" y="577.0" width="6.0" height="8.0"/>
<rect x="835.0" y="577.0" width="5.0" height="8.0"/>
<path d="M797 580H803M840 580H848" fill="none" stroke="#ff0000" stroke-width="1.5" stroke-linejoin="round"/>
<circle cx="801.0" cy="580.0" r="2.2"/>
<circle cx="848.0" cy="582.0" r="2.2"/>
<circle cx="847.0" cy="591.0" r="2.2"/>
<circle cx="869.0" cy="591.0" r="2.2"/>
<circle cx="785.0" cy="586.0" r="2.2"/>
<circle cx="807.0" cy="596.0" r="2.2"/>
<circle cx="795.0" cy="601.0" r="2.2"/>
<path d="M780 605V592H802L815 580H826" fill="none" stroke="#ff0000" stroke-width="1.5" stroke-linejoin="round"/>
<path d="M790 620V600H797L807 596" fill="none" stroke="#ff0000" stroke-width="1.3" stroke-linejoin="round"/>
<path d="M786 620V598" fill="none" stroke="#ff0000" stroke-width="1.3" stroke-linejoin="round"/>
<path d="M782 618V598" fill="none" stroke="#ff0000" stroke-width="1.1" stroke-linejoin="round"/>
<path d="M793 615V602" fill="none" stroke="#ff0000" stroke-width="1.1" stroke-linejoin="round"/>
<rect x="794.0" y="617.0" width="16.5" height="2.6"/>
<path d="M789 618.3H794M810.5 618.3H815" fill="none" stroke="#ff0000" stroke-width="1.0" stroke-linejoin="round"/>
<rect x="794.0" y="621.6" width="16.5" height="2.6"/>
<rect x="794.0" y="626.2" width="16.5" height="2.6"/>
<path d="M789 627.5H794M810.5 627.5H815" fill="none" stroke="#ff0000" stroke-width="1.0" stroke-linejoin="round"/>
<rect x="794.0" y="630.8" width="16.5" height="2.6"/>
<rect x="794.0" y="635.4" width="16.5" height="2.6"/>
<path d="M789 636.7H794M810.5 636.7H815" fill="none" stroke="#ff0000" stroke-width="1.0" stroke-linejoin="round"/>
<rect x="794.0" y="640.0" width="16.5" height="2.6"/>
<rect x="794.0" y="644.6" width="16.5" height="2.6"/>
<path d="M789 645.9H794M810.5 645.9H815" fill="none" stroke="#ff0000" stroke-width="1.0" stroke-linejoin="round"/>
<rect x="794.0" y="649.2" width="16.5" height="2.6"/>
<rect x="794.0" y="653.8" width="16.5" height="2.6"/>
<path d="M789 655.1H794M810.5 655.1H815" fill="none" stroke="#ff0000" stroke-width="1.0" stroke-linejoin="round"/>
<rect x="794.0" y="658.4" width="16.5" height="2.6"/>
<rect x="794.0" y="663.0" width="16.5" height="2.6"/>
<path d="M789 664.3H794M810.5 664.3H815" fill="none" stroke="#ff0000" stroke-width="1.0" stroke-linejoin="round"/>
<rect x="794.0" y="667.6" width="16.5" height="2.6"/>
<rect x="794.0" y="672.2" width="16.5" height="2.6"/>
<path d="M789 673.5H794M810.5 673.5H815" fill="none" stroke="#ff0000" stroke-width="1.0" stroke-linejoin="round"/>
<rect x="794.0" y="676.8" width="16.5" height="2.6"/>
<rect x="794.0" y="681.4" width="16.5" height="2.6"/>
<path d="M789 682.7H794M810.5 682.7H815" fill="none" stroke="#ff0000" stroke-width="1.0" stroke-linejoin="round"/>
<rect x="794.0" y="686.0" width="16.5" height="2.6"/>
<rect x="794.0" y="690.6" width="16.5" height="2.6"/>
<path d="M789 691.9H794M810.5 691.9H815" fill="none" stroke="#ff0000" stroke-width="1.0" stroke-linejoin="round"/>
<rect x="794.0" y="695.2" width="16.5" height="2.6"/>
<rect x="794.0" y="699.8" width="16.5" height="2.6"/>
<path d="M789 701.1H794M810.5 701.1H815" fill="none" stroke="#ff0000" stroke-width="1.0" stroke-linejoin="round"/>
<rect x="794.0" y="704.4" width="16.5" height="2.6"/>
<rect x="794.0" y="709.0" width="16.5" height="2.6"/>
<path d="M789 710.3H794M810.5 710.3H815" fill="none" stroke="#ff0000" stroke-width="1.0" stroke-linejoin="round"/>
<rect x="794.0" y="713.6" width="16.5" height="2.6"/>
<rect x="794.0" y="718.2" width="16.5" height="2.6"/>
<path d="M789 719.5H794M810.5 719.5H815" fill="none" stroke="#ff0000" stroke-width="1.0" stroke-linejoin="round"/>
<rect x="794.0" y="722.8" width="16.5" height="2.6"/>
<path d="M810 641H827L835 648" fill="none" stroke="#ff0000" stroke-width="1.3" stroke-linejoin="round"/>
<path d="M810 652H820" fill="none" stroke="#ff0000" stroke-width="1.3" stroke-linejoin="round"/>
<rect x="826.0" y="637.5" width="7.0" height="7.5"/>
<rect x="826.0" y="648.0" width="7.0" height="7.0"/>
<circle cx="838.0" cy="646.0" r="2.2"/>
<circle cx="820.0" cy="651.0" r="2.2"/>
<circle cx="848.3" cy="633.0" r="2.2"/>
<circle cx="848.3" cy="643.0" r="2.2"/>
<circle cx="848.3" cy="653.0" r="2.2"/>
<circle cx="848.3" cy="663.0" r="2.2"/>
<circle cx="869.6" cy="653.0" r="2.2"/>
<circle cx="869.6" cy="682.6" r="2.2"/>
<circle cx="829.0" cy="685.5" r="2.2"/>
<circle cx="829.0" cy="708.0" r="2.2"/>
<circle cx="775.0" cy="620.0" r="2.2"/>
<circle cx="790.0" cy="676.0" r="2.2"/>
<circle cx="789.0" cy="683.0" r="2.2"/>
<circle cx="808.0" cy="693.0" r="2.2"/>
<circle cx="792.0" cy="703.0" r="2.2"/>
<circle cx="784.0" cy="715.0" r="2.2"/>
<circle cx="809.0" cy="700.0" r="2.2"/>
<path d="M810 667H822L831 678H838L848 663" fill="none" stroke="#ff0000" stroke-width="1.3" stroke-linejoin="round"/>
<path d="M810 680H800V700L804 705" fill="none" stroke="#ff0000" stroke-width="1.2" stroke-linejoin="round"/>
<rect x="826.0" y="696.0" width="7.0" height="6.0"/>
<rect x="826.0" y="704.0" width="7.0" height="8.0"/>
<path d="M780 699V712" fill="none" stroke="#ff0000" stroke-width="1.2" stroke-linejoin="round"/>
<g fill="#cc0000"><rect x="777" y="694" width="16" height="16" opacity=".7"/></g>
<circle cx="816.7" cy="742.0" r="2.2"/>
<circle cx="846.0" cy="752.0" r="2.2"/>
<circle cx="805.5" cy="758.7" r="2.2"/>
<circle cx="793.5" cy="787.4" r="2.2"/>
<circle cx="869.0" cy="732.0" r="2.2"/>
<text x="878" y="751" transform="rotate(-90 878 751)" font-family="Liberation Sans" font-size="10" font-weight="bold" fill="#ff0000">L1</text>
<circle cx="463.0" cy="395.5" r="1.95"/>
<circle cx="460.0" cy="392.5" r="1.3"/>
<path d="M463.0 395.5L460.0 392.5" stroke="#ff0000" stroke-width="1.0"/>
<circle cx="470.9" cy="395.5" r="1.95"/>
<circle cx="467.9" cy="392.5" r="1.3"/>
<path d="M470.9 395.5L467.9 392.5" stroke="#ff0000" stroke-width="1.0"/>
<circle cx="478.7" cy="395.5" r="1.95"/>
<circle cx="475.7" cy="392.5" r="1.3"/>
<path d="M478.7 395.5L475.7 392.5" stroke="#ff0000" stroke-width="1.0"/>
<circle cx="486.6" cy="395.5" r="1.95"/>
<circle cx="483.6" cy="392.5" r="1.3"/>
<path d="M486.6 395.5L483.6 392.5" stroke="#ff0000" stroke-width="1.0"/>
<circle cx="494.4" cy="395.5" r="1.95"/>
<circle cx="491.4" cy="392.5" r="1.3"/>
<path d="M494.4 395.5L491.4 392.5" stroke="#ff0000" stroke-width="1.0"/>
<circle cx="502.2" cy="395.5" r="1.95"/>
<circle cx="499.2" cy="392.5" r="1.3"/>
<path d="M502.2 395.5L499.2 392.5" stroke="#ff0000" stroke-width="1.0"/>
<circle cx="510.1" cy="395.5" r="1.95"/>
<circle cx="507.1" cy="392.5" r="1.3"/>
<path d="M510.1 395.5L507.1 392.5" stroke="#ff0000" stroke-width="1.0"/>
<circle cx="518.0" cy="395.5" r="1.95"/>
<circle cx="515.0" cy="392.5" r="1.3"/>
<path d="M518.0 395.5L515.0 392.5" stroke="#ff0000" stroke-width="1.0"/>
<circle cx="525.8" cy="395.5" r="1.95"/>
<circle cx="522.8" cy="392.5" r="1.3"/>
<path d="M525.8 395.5L522.8 392.5" stroke="#ff0000" stroke-width="1.0"/>
<circle cx="533.6" cy="395.5" r="1.95"/>
<circle cx="530.6" cy="392.5" r="1.3"/>
<path d="M533.6 395.5L530.6 392.5" stroke="#ff0000" stroke-width="1.0"/>
<circle cx="541.5" cy="395.5" r="1.95"/>
<circle cx="538.5" cy="392.5" r="1.3"/>
<path d="M541.5 395.5L538.5 392.5" stroke="#ff0000" stroke-width="1.0"/>
<circle cx="549.4" cy="395.5" r="1.95"/>
<circle cx="546.4" cy="392.5" r="1.3"/>
<path d="M549.4 395.5L546.4 392.5" stroke="#ff0000" stroke-width="1.0"/>
<circle cx="557.2" cy="395.5" r="1.95"/>
<circle cx="554.2" cy="392.5" r="1.3"/>
<path d="M557.2 395.5L554.2 392.5" stroke="#ff0000" stroke-width="1.0"/>
<circle cx="565.0" cy="395.5" r="1.95"/>
<circle cx="562.0" cy="392.5" r="1.3"/>
<path d="M565.0 395.5L562.0 392.5" stroke="#ff0000" stroke-width="1.0"/>
<circle cx="572.9" cy="395.5" r="1.95"/>
<circle cx="569.9" cy="392.5" r="1.3"/>
<path d="M572.9 395.5L569.9 392.5" stroke="#ff0000" stroke-width="1.0"/>
<circle cx="580.8" cy="395.5" r="1.95"/>
<circle cx="577.8" cy="392.5" r="1.3"/>
<path d="M580.8 395.5L577.8 392.5" stroke="#ff0000" stroke-width="1.0"/>
<circle cx="588.6" cy="395.5" r="1.95"/>
<circle cx="585.6" cy="392.5" r="1.3"/>
<path d="M588.6 395.5L585.6 392.5" stroke="#ff0000" stroke-width="1.0"/>
<circle cx="596.5" cy="395.5" r="1.95"/>
<circle cx="593.5" cy="392.5" r="1.3"/>
<path d="M596.5 395.5L593.5 392.5" stroke="#ff0000" stroke-width="1.0"/>
<circle cx="604.3" cy="395.5" r="1.95"/>
<circle cx="601.3" cy="392.5" r="1.3"/>
<path d="M604.3 395.5L601.3 392.5" stroke="#ff0000" stroke-width="1.0"/>
<circle cx="612.1" cy="395.5" r="1.95"/>
<circle cx="609.1" cy="392.5" r="1.3"/>
<path d="M612.1 395.5L609.1 392.5" stroke="#ff0000" stroke-width="1.0"/>
<circle cx="463.0" cy="403.4" r="1.95"/>
<circle cx="460.0" cy="400.4" r="1.3"/>
<path d="M463.0 403.4L460.0 400.4" stroke="#ff0000" stroke-width="1.0"/>
<circle cx="470.9" cy="403.4" r="1.95"/>
<circle cx="467.9" cy="400.4" r="1.3"/>
<path d="M470.9 403.4L467.9 400.4" stroke="#ff0000" stroke-width="1.0"/>
<circle cx="478.7" cy="403.4" r="1.95"/>
<circle cx="475.7" cy="400.4" r="1.3"/>
<path d="M478.7 403.4L475.7 400.4" stroke="#ff0000" stroke-width="1.0"/>
<circle cx="486.6" cy="403.4" r="1.95"/>
<circle cx="483.6" cy="400.4" r="1.3"/>
<path d="M486.6 403.4L483.6 400.4" stroke="#ff0000" stroke-width="1.0"/>
<circle cx="494.4" cy="403.4" r="1.95"/>
<circle cx="491.4" cy="400.4" r="1.3"/>
<path d="M494.4 403.4L491.4 400.4" stroke="#ff0000" stroke-width="1.0"/>
<circle cx="502.2" cy="403.4" r="1.95"/>
<circle cx="499.2" cy="400.4" r="1.3"/>
<path d="M502.2 403.4L499.2 400.4" stroke="#ff0000" stroke-width="1.0"/>
<circle cx="510.1" cy="403.4" r="1.95"/>
<circle cx="507.1" cy="400.4" r="1.3"/>
<path d="M510.1 403.4L507.1 400.4" stroke="#ff0000" stroke-width="1.0"/>
<circle cx="518.0" cy="403.4" r="1.95"/>
<circle cx="515.0" cy="400.4" r="1.3"/>
<path d="M518.0 403.4L515.0 400.4" stroke="#ff0000" stroke-width="1.0"/>
<circle cx="525.8" cy="403.4" r="1.95"/>
<circle cx="522.8" cy="400.4" r="1.3"/>
<path d="M525.8 403.4L522.8 400.4" stroke="#ff0000" stroke-width="1.0"/>
<circle cx="533.6" cy="403.4" r="1.95"/>
<circle cx="530.6" cy="400.4" r="1.3"/>
<path d="M533.6 403.4L530.6 400.4" stroke="#ff0000" stroke-width="1.0"/>
<circle cx="541.5" cy="403.4" r="1.95"/>
<circle cx="538.5" cy="400.4" r="1.3"/>
<path d="M541.5 403.4L538.5 400.4" stroke="#ff0000" stroke-width="1.0"/>
<circle cx="549.4" cy="403.4" r="1.95"/>
<circle cx="546.4" cy="400.4" r="1.3"/>
<path d="M549.4 403.4L546.4 400.4" stroke="#ff0000" stroke-width="1.0"/>
<circle cx="557.2" cy="403.4" r="1.95"/>
<circle cx="554.2" cy="400.4" r="1.3"/>
<path d="M557.2 403.4L554.2 400.4" stroke="#ff0000" stroke-width="1.0"/>
<circle cx="565.0" cy="403.4" r="1.95"/>
<circle cx="562.0" cy="400.4" r="1.3"/>
<path d="M565.0 403.4L562.0 400.4" stroke="#ff0000" stroke-width="1.0"/>
<circle cx="572.9" cy="403.4" r="1.95"/>
<circle cx="569.9" cy="400.4" r="1.3"/>
<path d="M572.9 403.4L569.9 400.4" stroke="#ff0000" stroke-width="1.0"/>
<circle cx="580.8" cy="403.4" r="1.95"/>
<circle cx="577.8" cy="400.4" r="1.3"/>
<path d="M580.8 403.4L577.8 400.4" stroke="#ff0000" stroke-width="1.0"/>
<circle cx="588.6" cy="403.4" r="1.95"/>
<circle cx="585.6" cy="400.4" r="1.3"/>
<path d="M588.6 403.4L585.6 400.4" stroke="#ff0000" stroke-width="1.0"/>
<circle cx="596.5" cy="403.4" r="1.95"/>
<circle cx="593.5" cy="400.4" r="1.3"/>
<path d="M596.5 403.4L593.5 400.4" stroke="#ff0000" stroke-width="1.0"/>
<circle cx="604.3" cy="403.4" r="1.95"/>
<circle cx="601.3" cy="400.4" r="1.3"/>
<path d="M604.3 403.4L601.3 400.4" stroke="#ff0000" stroke-width="1.0"/>
<circle cx="612.1" cy="403.4" r="1.95"/>
<circle cx="609.1" cy="400.4" r="1.3"/>
<path d="M612.1 403.4L609.1 400.4" stroke="#ff0000" stroke-width="1.0"/>
<circle cx="463.0" cy="411.2" r="1.95"/>
<circle cx="460.0" cy="408.2" r="1.3"/>
<path d="M463.0 411.2L460.0 408.2" stroke="#ff0000" stroke-width="1.0"/>
<circle cx="470.9" cy="411.2" r="1.95"/>
<circle cx="467.9" cy="408.2" r="1.3"/>
<path d="M470.9 411.2L467.9 408.2" stroke="#ff0000" stroke-width="1.0"/>
<circle cx="478.7" cy="411.2" r="1.95"/>
<circle cx="475.7" cy="408.2" r="1.3"/>
<path d="M478.7 411.2L475.7 408.2" stroke="#ff0000" stroke-width="1.0"/>
<circle cx="486.6" cy="411.2" r="1.95"/>
<circle cx="483.6" cy="408.2" r="1.3"/>
<path d="M486.6 411.2L483.6 408.2" stroke="#ff0000" stroke-width="1.0"/>
<circle cx="494.4" cy="411.2" r="1.95"/>
<circle cx="491.4" cy="408.2" r="1.3"/>
<path d="M494.4 411.2L491.4 408.2" stroke="#ff0000" stroke-width="1.0"/>
<circle cx="502.2" cy="411.2" r="1.95"/>
<circle cx="499.2" cy="408.2" r="1.3"/>
<path d="M502.2 411.2L499.2 408.2" stroke="#ff0000" stroke-width="1.0"/>
<circle cx="510.1" cy="411.2" r="1.95"/>
<circle cx="507.1" cy="408.2" r="1.3"/>
<path d="M510.1 411.2L507.1 408.2" stroke="#ff0000" stroke-width="1.0"/>
<circle cx="518.0" cy="411.2" r="1.95"/>
<circle cx="515.0" cy="408.2" r="1.3"/>
<path d="M518.0 411.2L515.0 408.2" stroke="#ff0000" stroke-width="1.0"/>
<circle cx="525.8" cy="411.2" r="1.95"/>
<circle cx="522.8" cy="408.2" r="1.3"/>
<path d="M525.8 411.2L522.8 408.2" stroke="#ff0000" stroke-width="1.0"/>
<circle cx="533.6" cy="411.2" r="1.95"/>
<circle cx="530.6" cy="408.2" r="1.3"/>
<path d="M533.6 411.2L530.6 408.2" stroke="#ff0000" stroke-width="1.0"/>
<circle cx="541.5" cy="411.2" r="1.95"/>
<circle cx="538.5" cy="408.2" r="1.3"/>
<path d="M541.5 411.2L538.5 408.2" stroke="#ff0000" stroke-width="1.0"/>
<circle cx="549.4" cy="411.2" r="1.95"/>
<circle cx="546.4" cy="408.2" r="1.3"/>
<path d="M549.4 411.2L546.4 408.2" stroke="#ff0000" stroke-width="1.0"/>
<circle cx="557.2" cy="411.2" r="1.95"/>
<circle cx="554.2" cy="408.2" r="1.3"/>
<path d="M557.2 411.2L554.2 408.2" stroke="#ff0000" stroke-width="1.0"/>
<circle cx="565.0" cy="411.2" r="1.95"/>
<circle cx="562.0" cy="408.2" r="1.3"/>
<path d="M565.0 411.2L562.0 408.2" stroke="#ff0000" stroke-width="1.0"/>
<circle cx="572.9" cy="411.2" r="1.95"/>
<circle cx="569.9" cy="408.2" r="1.3"/>
<path d="M572.9 411.2L569.9 408.2" stroke="#ff0000" stroke-width="1.0"/>
<circle cx="580.8" cy="411.2" r="1.95"/>
<circle cx="577.8" cy="408.2" r="1.3"/>
<path d="M580.8 411.2L577.8 408.2" stroke="#ff0000" stroke-width="1.0"/>
<circle cx="588.6" cy="411.2" r="1.95"/>
<circle cx="585.6" cy="408.2" r="1.3"/>
<path d="M588.6 411.2L585.6 408.2" stroke="#ff0000" stroke-width="1.0"/>
<circle cx="596.5" cy="411.2" r="1.95"/>
<circle cx="593.5" cy="408.2" r="1.3"/>
<path d="M596.5 411.2L593.5 408.2" stroke="#ff0000" stroke-width="1.0"/>
<circle cx="604.3" cy="411.2" r="1.95"/>
<circle cx="601.3" cy="408.2" r="1.3"/>
<path d="M604.3 411.2L601.3 408.2" stroke="#ff0000" stroke-width="1.0"/>
<circle cx="612.1" cy="411.2" r="1.95"/>
<circle cx="609.1" cy="408.2" r="1.3"/>
<path d="M612.1 411.2L609.1 408.2" stroke="#ff0000" stroke-width="1.0"/>
<circle cx="463.0" cy="419.1" r="1.95"/>
<circle cx="460.0" cy="416.1" r="1.3"/>
<path d="M463.0 419.1L460.0 416.1" stroke="#ff0000" stroke-width="1.0"/>
<circle cx="470.9" cy="419.1" r="1.95"/>
<circle cx="467.9" cy="416.1" r="1.3"/>
<path d="M470.9 419.1L467.9 416.1" stroke="#ff0000" stroke-width="1.0"/>
<circle cx="478.7" cy="419.1" r="1.95"/>
<circle cx="475.7" cy="416.1" r="1.3"/>
<path d="M478.7 419.1L475.7 416.1" stroke="#ff0000" stroke-width="1.0"/>
<circle cx="486.6" cy="419.1" r="1.95"/>
<circle cx="483.6" cy="416.1" r="1.3"/>
<path d="M486.6 419.1L483.6 416.1" stroke="#ff0000" stroke-width="1.0"/>
<circle cx="494.4" cy="419.1" r="1.95"/>
<circle cx="491.4" cy="416.1" r="1.3"/>
<path d="M494.4 419.1L491.4 416.1" stroke="#ff0000" stroke-width="1.0"/>
<circle cx="502.2" cy="419.1" r="1.95"/>
<circle cx="499.2" cy="416.1" r="1.3"/>
<path d="M502.2 419.1L499.2 416.1" stroke="#ff0000" stroke-width="1.0"/>
<circle cx="510.1" cy="419.1" r="1.95"/>
<circle cx="507.1" cy="416.1" r="1.3"/>
<path d="M510.1 419.1L507.1 416.1" stroke="#ff0000" stroke-width="1.0"/>
<circle cx="518.0" cy="419.1" r="1.95"/>
<circle cx="515.0" cy="416.1" r="1.3"/>
<path d="M518.0 419.1L515.0 416.1" stroke="#ff0000" stroke-width="1.0"/>
<circle cx="525.8" cy="419.1" r="1.95"/>
<circle cx="522.8" cy="416.1" r="1.3"/>
<path d="M525.8 419.1L522.8 416.1" stroke="#ff0000" stroke-width="1.0"/>
<circle cx="533.6" cy="419.1" r="1.95"/>
<circle cx="530.6" cy="416.1" r="1.3"/>
<path d="M533.6 419.1L530.6 416.1" stroke="#ff0000" stroke-width="1.0"/>
<circle cx="541.5" cy="419.1" r="1.95"/>
<circle cx="538.5" cy="416.1" r="1.3"/>
<path d="M541.5 419.1L538.5 416.1" stroke="#ff0000" stroke-width="1.0"/>
<circle cx="549.4" cy="419.1" r="1.95"/>
<circle cx="546.4" cy="416.1" r="1.3"/>
<path d="M549.4 419.1L546.4 416.1" stroke="#ff0000" stroke-width="1.0"/>
<circle cx="557.2" cy="419.1" r="1.95"/>
<circle cx="554.2" cy="416.1" r="1.3"/>
<path d="M557.2 419.1L554.2 416.1" stroke="#ff0000" stroke-width="1.0"/>
<circle cx="565.0" cy="419.1" r="1.95"/>
<circle cx="562.0" cy="416.1" r="1.3"/>
<path d="M565.0 419.1L562.0 416.1" stroke="#ff0000" stroke-width="1.0"/>
<circle cx="572.9" cy="419.1" r="1.95"/>
<circle cx="569.9" cy="416.1" r="1.3"/>
<path d="M572.9 419.1L569.9 416.1" stroke="#ff0000" stroke-width="1.0"/>
<circle cx="580.8" cy="419.1" r="1.95"/>
<circle cx="577.8" cy="416.1" r="1.3"/>
<path d="M580.8 419.1L577.8 416.1" stroke="#ff0000" stroke-width="1.0"/>
<circle cx="588.6" cy="419.1" r="1.95"/>
<circle cx="585.6" cy="416.1" r="1.3"/>
<path d="M588.6 419.1L585.6 416.1" stroke="#ff0000" stroke-width="1.0"/>
<circle cx="596.5" cy="419.1" r="1.95"/>
<circle cx="593.5" cy="416.1" r="1.3"/>
<path d="M596.5 419.1L593.5 416.1" stroke="#ff0000" stroke-width="1.0"/>
<circle cx="604.3" cy="419.1" r="1.95"/>
<circle cx="601.3" cy="416.1" r="1.3"/>
<path d="M604.3 419.1L601.3 416.1" stroke="#ff0000" stroke-width="1.0"/>
<circle cx="612.1" cy="419.1" r="1.95"/>
<circle cx="609.1" cy="416.1" r="1.3"/>
<path d="M612.1 419.1L609.1 416.1" stroke="#ff0000" stroke-width="1.0"/>
<circle cx="463.0" cy="426.9" r="1.95"/>
<circle cx="460.0" cy="423.9" r="1.3"/>
<path d="M463.0 426.9L460.0 423.9" stroke="#ff0000" stroke-width="1.0"/>
<circle cx="470.9" cy="426.9" r="1.95"/>
<circle cx="467.9" cy="423.9" r="1.3"/>
<path d="M470.9 426.9L467.9 423.9" stroke="#ff0000" stroke-width="1.0"/>
<circle cx="478.7" cy="426.9" r="1.95"/>
<circle cx="475.7" cy="423.9" r="1.3"/>
<path d="M478.7 426.9L475.7 423.9" stroke="#ff0000" stroke-width="1.0"/>
<circle cx="486.6" cy="426.9" r="1.95"/>
<circle cx="483.6" cy="423.9" r="1.3"/>
<path d="M486.6 426.9L483.6 423.9" stroke="#ff0000" stroke-width="1.0"/>
<circle cx="494.4" cy="426.9" r="1.95"/>
<circle cx="491.4" cy="423.9" r="1.3"/>
<path d="M494.4 426.9L491.4 423.9" stroke="#ff0000" stroke-width="1.0"/>
<circle cx="502.2" cy="426.9" r="1.95"/>
<circle cx="499.2" cy="423.9" r="1.3"/>
<path d="M502.2 426.9L499.2 423.9" stroke="#ff0000" stroke-width="1.0"/>
<circle cx="510.1" cy="426.9" r="1.95"/>
<circle cx="507.1" cy="423.9" r="1.3"/>
<path d="M510.1 426.9L507.1 423.9" stroke="#ff0000" stroke-width="1.0"/>
<circle cx="518.0" cy="426.9" r="1.95"/>
<circle cx="515.0" cy="423.9" r="1.3"/>
<path d="M518.0 426.9L515.0 423.9" stroke="#ff0000" stroke-width="1.0"/>
<circle cx="525.8" cy="426.9" r="1.95"/>
<circle cx="522.8" cy="423.9" r="1.3"/>
<path d="M525.8 426.9L522.8 423.9" stroke="#ff0000" stroke-width="1.0"/>
<circle cx="533.6" cy="426.9" r="1.95"/>
<circle cx="530.6" cy="423.9" r="1.3"/>
<path d="M533.6 426.9L530.6 423.9" stroke="#ff0000" stroke-width="1.0"/>
<circle cx="541.5" cy="426.9" r="1.95"/>
<circle cx="538.5" cy="423.9" r="1.3"/>
<path d="M541.5 426.9L538.5 423.9" stroke="#ff0000" stroke-width="1.0"/>
<circle cx="549.4" cy="426.9" r="1.95"/>
<circle cx="546.4" cy="423.9" r="1.3"/>
<path d="M549.4 426.9L546.4 423.9" stroke="#ff0000" stroke-width="1.0"/>
<circle cx="557.2" cy="426.9" r="1.95"/>
<circle cx="554.2" cy="423.9" r="1.3"/>
<path d="M557.2 426.9L554.2 423.9" stroke="#ff0000" stroke-width="1.0"/>
<circle cx="565.0" cy="426.9" r="1.95"/>
<circle cx="562.0" cy="423.9" r="1.3"/>
<path d="M565.0 426.9L562.0 423.9" stroke="#ff0000" stroke-width="1.0"/>
<circle cx="572.9" cy="426.9" r="1.95"/>
<circle cx="569.9" cy="423.9" r="1.3"/>
<path d="M572.9 426.9L569.9 423.9" stroke="#ff0000" stroke-width="1.0"/>
<circle cx="580.8" cy="426.9" r="1.95"/>
<circle cx="577.8" cy="423.9" r="1.3"/>
<path d="M580.8 426.9L577.8 423.9" stroke="#ff0000" stroke-width="1.0"/>
<circle cx="588.6" cy="426.9" r="1.95"/>
<circle cx="585.6" cy="423.9" r="1.3"/>
<path d="M588.6 426.9L585.6 423.9" stroke="#ff0000" stroke-width="1.0"/>
<circle cx="596.5" cy="426.9" r="1.95"/>
<circle cx="593.5" cy="423.9" r="1.3"/>
<path d="M596.5 426.9L593.5 423.9" stroke="#ff0000" stroke-width="1.0"/>
<circle cx="604.3" cy="426.9" r="1.95"/>
<circle cx="601.3" cy="423.9" r="1.3"/>
<path d="M604.3 426.9L601.3 423.9" stroke="#ff0000" stroke-width="1.0"/>
<circle cx="612.1" cy="426.9" r="1.95"/>
<circle cx="609.1" cy="423.9" r="1.3"/>
<path d="M612.1 426.9L609.1 423.9" stroke="#ff0000" stroke-width="1.0"/>
<circle cx="463.0" cy="434.8" r="1.95"/>
<circle cx="460.0" cy="431.8" r="1.3"/>
<path d="M463.0 434.8L460.0 431.8" stroke="#ff0000" stroke-width="1.0"/>
<circle cx="470.9" cy="434.8" r="1.95"/>
<circle cx="467.9" cy="431.8" r="1.3"/>
<path d="M470.9 434.8L467.9 431.8" stroke="#ff0000" stroke-width="1.0"/>
<circle cx="478.7" cy="434.8" r="1.95"/>
<circle cx="475.7" cy="431.8" r="1.3"/>
<path d="M478.7 434.8L475.7 431.8" stroke="#ff0000" stroke-width="1.0"/>
<circle cx="486.6" cy="434.8" r="1.95"/>
<circle cx="483.6" cy="431.8" r="1.3"/>
<path d="M486.6 434.8L483.6 431.8" stroke="#ff0000" stroke-width="1.0"/>
<circle cx="580.8" cy="434.8" r="1.95"/>
<circle cx="577.8" cy="431.8" r="1.3"/>
<path d="M580.8 434.8L577.8 431.8" stroke="#ff0000" stroke-width="1.0"/>
<circle cx="588.6" cy="434.8" r="1.95"/>
<circle cx="585.6" cy="431.8" r="1.3"/>
<path d="M588.6 434.8L585.6 431.8" stroke="#ff0000" stroke-width="1.0"/>
<circle cx="596.5" cy="434.8" r="1.95"/>
<circle cx="593.5" cy="431.8" r="1.3"/>
<path d="M596.5 434.8L593.5 431.8" stroke="#ff0000" stroke-width="1.0"/>
<circle cx="604.3" cy="434.8" r="1.95"/>
<circle cx="601.3" cy="431.8" r="1.3"/>
<path d="M604.3 434.8L601.3 431.8" stroke="#ff0000" stroke-width="1.0"/>
<circle cx="612.1" cy="434.8" r="1.95"/>
<circle cx="609.1" cy="431.8" r="1.3"/>
<path d="M612.1 434.8L609.1 431.8" stroke="#ff0000" stroke-width="1.0"/>
<circle cx="463.0" cy="442.6" r="1.95"/>
<circle cx="460.0" cy="439.6" r="1.3"/>
<path d="M463.0 442.6L460.0 439.6" stroke="#ff0000" stroke-width="1.0"/>
<circle cx="470.9" cy="442.6" r="1.95"/>
<circle cx="467.9" cy="439.6" r="1.3"/>
<path d="M470.9 442.6L467.9 439.6" stroke="#ff0000" stroke-width="1.0"/>
<circle cx="478.7" cy="442.6" r="1.95"/>
<circle cx="475.7" cy="439.6" r="1.3"/>
<path d="M478.7 442.6L475.7 439.6" stroke="#ff0000" stroke-width="1.0"/>
<circle cx="486.6" cy="442.6" r="1.95"/>
<circle cx="483.6" cy="439.6" r="1.3"/>
<path d="M486.6 442.6L483.6 439.6" stroke="#ff0000" stroke-width="1.0"/>
<circle cx="580.8" cy="442.6" r="1.95"/>
<circle cx="577.8" cy="439.6" r="1.3"/>
<path d="M580.8 442.6L577.8 439.6" stroke="#ff0000" stroke-width="1.0"/>
<circle cx="588.6" cy="442.6" r="1.95"/>
<circle cx="585.6" cy="439.6" r="1.3"/>
<path d="M588.6 442.6L585.6 439.6" stroke="#ff0000" stroke-width="1.0"/>
<circle cx="596.5" cy="442.6" r="1.95"/>
<circle cx="593.5" cy="439.6" r="1.3"/>
<path d="M596.5 442.6L593.5 439.6" stroke="#ff0000" stroke-width="1.0"/>
<circle cx="604.3" cy="442.6" r="1.95"/>
<circle cx="601.3" cy="439.6" r="1.3"/>
<path d="M604.3 442.6L601.3 439.6" stroke="#ff0000" stroke-width="1.0"/>
<circle cx="612.1" cy="442.6" r="1.95"/>
<circle cx="609.1" cy="439.6" r="1.3"/>
<path d="M612.1 442.6L609.1 439.6" stroke="#ff0000" stroke-width="1.0"/>
<circle cx="463.0" cy="450.4" r="1.95"/>
<circle cx="460.0" cy="447.4" r="1.3"/>
<path d="M463.0 450.4L460.0 447.4" stroke="#ff0000" stroke-width="1.0"/>
<circle cx="470.9" cy="450.4" r="1.95"/>
<circle cx="467.9" cy="447.4" r="1.3"/>
<path d="M470.9 450.4L467.9 447.4" stroke="#ff0000" stroke-width="1.0"/>
<circle cx="478.7" cy="450.4" r="1.95"/>
<circle cx="475.7" cy="447.4" r="1.3"/>
<path d="M478.7 450.4L475.7 447.4" stroke="#ff0000" stroke-width="1.0"/>
<circle cx="486.6" cy="450.4" r="1.95"/>
<circle cx="483.6" cy="447.4" r="1.3"/>
<path d="M486.6 450.4L483.6 447.4" stroke="#ff0000" stroke-width="1.0"/>
<circle cx="580.8" cy="450.4" r="1.95"/>
<circle cx="577.8" cy="447.4" r="1.3"/>
<path d="M580.8 450.4L577.8 447.4" stroke="#ff0000" stroke-width="1.0"/>
<circle cx="588.6" cy="450.4" r="1.95"/>
<circle cx="585.6" cy="447.4" r="1.3"/>
<path d="M588.6 450.4L585.6 447.4" stroke="#ff0000" stroke-width="1.0"/>
<circle cx="596.5" cy="450.4" r="1.95"/>
<circle cx="593.5" cy="447.4" r="1.3"/>
<path d="M596.5 450.4L593.5 447.4" stroke="#ff0000" stroke-width="1.0"/>
<circle cx="604.3" cy="450.4" r="1.95"/>
<circle cx="601.3" cy="447.4" r="1.3"/>
<path d="M604.3 450.4L601.3 447.4" stroke="#ff0000" stroke-width="1.0"/>
<circle cx="612.1" cy="450.4" r="1.95"/>
<circle cx="609.1" cy="447.4" r="1.3"/>
<path d="M612.1 450.4L609.1 447.4" stroke="#ff0000" stroke-width="1.0"/>
<circle cx="463.0" cy="458.3" r="1.95"/>
<circle cx="460.0" cy="455.3" r="1.3"/>
<path d="M463.0 458.3L460.0 455.3" stroke="#ff0000" stroke-width="1.0"/>
<circle cx="470.9" cy="458.3" r="1.95"/>
<circle cx="467.9" cy="455.3" r="1.3"/>
<path d="M470.9 458.3L467.9 455.3" stroke="#ff0000" stroke-width="1.0"/>
<circle cx="478.7" cy="458.3" r="1.95"/>
<circle cx="475.7" cy="455.3" r="1.3"/>
<path d="M478.7 458.3L475.7 455.3" stroke="#ff0000" stroke-width="1.0"/>
<circle cx="486.6" cy="458.3" r="1.95"/>
<circle cx="483.6" cy="455.3" r="1.3"/>
<path d="M486.6 458.3L483.6 455.3" stroke="#ff0000" stroke-width="1.0"/>
<circle cx="580.8" cy="458.3" r="1.95"/>
<circle cx="577.8" cy="455.3" r="1.3"/>
<path d="M580.8 458.3L577.8 455.3" stroke="#ff0000" stroke-width="1.0"/>
<circle cx="588.6" cy="458.3" r="1.95"/>
<circle cx="585.6" cy="455.3" r="1.3"/>
<path d="M588.6 458.3L585.6 455.3" stroke="#ff0000" stroke-width="1.0"/>
<circle cx="596.5" cy="458.3" r="1.95"/>
<circle cx="593.5" cy="455.3" r="1.3"/>
<path d="M596.5 458.3L593.5 455.3" stroke="#ff0000" stroke-width="1.0"/>
<circle cx="604.3" cy="458.3" r="1.95"/>
<circle cx="601.3" cy="455.3" r="1.3"/>
<path d="M604.3 458.3L601.3 455.3" stroke="#ff0000" stroke-width="1.0"/>
<circle cx="612.1" cy="458.3" r="1.95"/>
<circle cx="609.1" cy="455.3" r="1.3"/>
<path d="M612.1 458.3L609.1 455.3" stroke="#ff0000" stroke-width="1.0"/>
<circle cx="463.0" cy="466.1" r="1.95"/>
<circle cx="460.0" cy="463.1" r="1.3"/>
<path d="M463.0 466.1L460.0 463.1" stroke="#ff0000" stroke-width="1.0"/>
<circle cx="470.9" cy="466.1" r="1.95"/>
<circle cx="467.9" cy="463.1" r="1.3"/>
<path d="M470.9 466.1L467.9 463.1" stroke="#ff0000" stroke-width="1.0"/>
<circle cx="478.7" cy="466.1" r="1.95"/>
<circle cx="475.7" cy="463.1" r="1.3"/>
<path d="M478.7 466.1L475.7 463.1" stroke="#ff0000" stroke-width="1.0"/>
<circle cx="486.6" cy="466.1" r="1.95"/>
<circle cx="483.6" cy="463.1" r="1.3"/>
<path d="M486.6 466.1L483.6 463.1" stroke="#ff0000" stroke-width="1.0"/>
<circle cx="580.8" cy="466.1" r="1.95"/>
<circle cx="577.8" cy="463.1" r="1.3"/>
<path d="M580.8 466.1L577.8 463.1" stroke="#ff0000" stroke-width="1.0"/>
<circle cx="588.6" cy="466.1" r="1.95"/>
<circle cx="585.6" cy="463.1" r="1.3"/>
<path d="M588.6 466.1L585.6 463.1" stroke="#ff0000" stroke-width="1.0"/>
<circle cx="596.5" cy="466.1" r="1.95"/>
<circle cx="593.5" cy="463.1" r="1.3"/>
<path d="M596.5 466.1L593.5 463.1" stroke="#ff0000" stroke-width="1.0"/>
<circle cx="604.3" cy="466.1" r="1.95"/>
<circle cx="601.3" cy="463.1" r="1.3"/>
<path d="M604.3 466.1L601.3 463.1" stroke="#ff0000" stroke-width="1.0"/>
<circle cx="612.1" cy="466.1" r="1.95"/>
<circle cx="609.1" cy="463.1" r="1.3"/>
<path d="M612.1 466.1L609.1 463.1" stroke="#ff0000" stroke-width="1.0"/>
<circle cx="463.0" cy="474.0" r="1.95"/>
<circle cx="460.0" cy="471.0" r="1.3"/>
<path d="M463.0 474.0L460.0 471.0" stroke="#ff0000" stroke-width="1.0"/>
<circle cx="470.9" cy="474.0" r="1.95"/>
<circle cx="467.9" cy="471.0" r="1.3"/>
<path d="M470.9 474.0L467.9 471.0" stroke="#ff0000" stroke-width="1.0"/>
<circle cx="478.7" cy="474.0" r="1.95"/>
<circle cx="475.7" cy="471.0" r="1.3"/>
<path d="M478.7 474.0L475.7 471.0" stroke="#ff0000" stroke-width="1.0"/>
<circle cx="486.6" cy="474.0" r="1.95"/>
<circle cx="483.6" cy="471.0" r="1.3"/>
<path d="M486.6 474.0L483.6 471.0" stroke="#ff0000" stroke-width="1.0"/>
<circle cx="580.8" cy="474.0" r="1.95"/>
<circle cx="577.8" cy="471.0" r="1.3"/>
<path d="M580.8 474.0L577.8 471.0" stroke="#ff0000" stroke-width="1.0"/>
<circle cx="588.6" cy="474.0" r="1.95"/>
<circle cx="585.6" cy="471.0" r="1.3"/>
<path d="M588.6 474.0L585.6 471.0" stroke="#ff0000" stroke-width="1.0"/>
<circle cx="596.5" cy="474.0" r="1.95"/>
<circle cx="593.5" cy="471.0" r="1.3"/>
<path d="M596.5 474.0L593.5 471.0" stroke="#ff0000" stroke-width="1.0"/>
<circle cx="604.3" cy="474.0" r="1.95"/>
<circle cx="601.3" cy="471.0" r="1.3"/>
<path d="M604.3 474.0L601.3 471.0" stroke="#ff0000" stroke-width="1.0"/>
<circle cx="612.1" cy="474.0" r="1.95"/>
<circle cx="609.1" cy="471.0" r="1.3"/>
<path d="M612.1 474.0L609.1 471.0" stroke="#ff0000" stroke-width="1.0"/>
<path d="M495.3 431.5H572.2L575.2 434.5V487L572.2 490H495.3L492.3 487V434.5Z"/>
<path d="M547 387V425L555 433H578L585 440V475" fill="none" stroke="#ff0000" stroke-width="1.2" stroke-linejoin="round"/>
<path d="M552 387V423L558 429H581L589 437V475" fill="none" stroke="#ff0000" stroke-width="1.2" stroke-linejoin="round"/>
<path d="M556 383V421L561 426H584L593 434V475" fill="none" stroke="#ff0000" stroke-width="1.2" stroke-linejoin="round"/>
<path d="M612.4 403L614.0 401L630.0 386.3L632 384.3H636" fill="none" stroke="#ff0000" stroke-width="1.3" stroke-linejoin="round"/>
<path d="M612.4 411.3L614.3 409.3L630.0 389.8L632 387.8H636" fill="none" stroke="#ff0000" stroke-width="1.3" stroke-linejoin="round"/>
<path d="M612.4 419L614.6 417L630.0 393.4L632 391.4H636" fill="none" stroke="#ff0000" stroke-width="1.3" stroke-linejoin="round"/>
<path d="M612.4 427L614.9 425L630.0 396.5L632 394.5H636" fill="none" stroke="#ff0000" stroke-width="1.3" stroke-linejoin="round"/>
<path d="M612.4 434.7L615.2 432.7L630.0 402.6L632 400.6H636" fill="none" stroke="#ff0000" stroke-width="1.3" stroke-linejoin="round"/>
<path d="M612.4 442.9L615.5 440.9L630.0 405.6L632 403.6H636" fill="none" stroke="#ff0000" stroke-width="1.3" stroke-linejoin="round"/>
<path d="M612.4 451L615.8 449L630.0 409.2L632 407.2H636" fill="none" stroke="#ff0000" stroke-width="1.3" stroke-linejoin="round"/>
<path d="M612.4 458.7L616.1 456.7L630.0 412.8L632 410.8H636" fill="none" stroke="#ff0000" stroke-width="1.3" stroke-linejoin="round"/>
<rect x="634.8" y="383.1" width="3.6" height="2.4"/>
<rect x="640.5" y="383.1" width="6.5" height="2.4"/>
<rect x="634.8" y="386.6" width="3.6" height="2.4"/>
<rect x="640.5" y="386.6" width="6.5" height="2.4"/>
<rect x="634.8" y="390.2" width="3.6" height="2.4"/>
<rect x="640.5" y="390.2" width="6.5" height="2.4"/>
<rect x="634.8" y="393.3" width="3.6" height="2.4"/>
<rect x="640.5" y="393.3" width="6.5" height="2.4"/>
<rect x="634.8" y="399.4" width="3.6" height="2.4"/>
<rect x="640.5" y="399.4" width="6.5" height="2.4"/>
<rect x="634.8" y="402.4" width="3.6" height="2.4"/>
<rect x="640.5" y="402.4" width="6.5" height="2.4"/>
<rect x="634.8" y="406.0" width="3.6" height="2.4"/>
<rect x="640.5" y="406.0" width="6.5" height="2.4"/>
<rect x="634.8" y="409.6" width="3.6" height="2.4"/>
<rect x="640.5" y="409.6" width="6.5" height="2.4"/>
<rect x="634.8" y="415.7" width="3.6" height="2.4"/>
<rect x="640.5" y="415.7" width="6.5" height="2.4"/>
<rect x="634.8" y="418.8" width="3.6" height="2.4"/>
<rect x="640.5" y="418.8" width="6.5" height="2.4"/>
<rect x="634.8" y="421.8" width="3.6" height="2.4"/>
<rect x="640.5" y="421.8" width="6.5" height="2.4"/>
<rect x="634.8" y="424.8" width="3.6" height="2.4"/>
<rect x="640.5" y="424.8" width="6.5" height="2.4"/>
<rect x="634.8" y="453.8" width="3.6" height="2.4"/>
<rect x="640.5" y="453.8" width="6.5" height="2.4"/>
<rect x="634.8" y="457.5" width="3.6" height="2.4"/>
<rect x="640.5" y="457.5" width="6.5" height="2.4"/>
<rect x="634.8" y="461.0" width="3.6" height="2.4"/>
<rect x="640.5" y="461.0" width="6.5" height="2.4"/>
<rect x="634.8" y="464.6" width="3.6" height="2.4"/>
<rect x="640.5" y="464.6" width="6.5" height="2.4"/>
<rect x="634.8" y="469.8" width="3.6" height="2.4"/>
<rect x="640.5" y="469.8" width="6.5" height="2.4"/>
<rect x="634.5" y="433.7" width="4.5" height="4.6"/>
<rect x="643.0" y="433.7" width="5.0" height="4.6"/>
<rect x="634.5" y="442.4" width="4.5" height="6.1"/>
<rect x="643.0" y="442.4" width="5.0" height="6.1"/>
<path d="M612.4 442.9H628L632 436H636M612.4 451H628L632 446H636" fill="none" stroke="#ff0000" stroke-width="1.1" stroke-linejoin="round"/>
<path d="M612.4 458.7H622L630 455H636M612.4 466.3H624L630 462H636M612.4 474H626L632 466H636" fill="none" stroke="#ff0000" stroke-width="1.1" stroke-linejoin="round"/>
<path d="M626 420H636M624 423H636M622 426H636" fill="none" stroke="#ff0000" stroke-width="1.0" stroke-linejoin="round"/>
<circle cx="461.0" cy="384.0" r="2.2"/>
<circle cx="474.0" cy="384.0" r="2.2"/>
<circle cx="486.0" cy="384.0" r="2.2"/>
<circle cx="499.0" cy="384.0" r="2.2"/>
<circle cx="510.0" cy="380.0" r="2.2"/>
<circle cx="531.0" cy="380.0" r="2.2"/>
<circle cx="613.0" cy="385.0" r="2.2"/>
<circle cx="620.0" cy="380.0" r="2.2"/>
<circle cx="592.0" cy="378.0" r="2.2"/>
<circle cx="647.0" cy="373.0" r="2.2"/>
<path d="M460 388V380L466 378M474 388V378M486 388V378M498 388V379" fill="none" stroke="#ff0000" stroke-width="1.2" stroke-linejoin="round"/>
<path d="M504 388L513 378M520 390L528 380" fill="none" stroke="#ff0000" stroke-width="1.2" stroke-linejoin="round"/>
<rect x="452.0" y="385.0" width="3.0" height="7.0"/>
<rect x="452.0" y="385.0" width="8.0" height="3.0"/>
<path d="M436 392L452 407H470M436 404.5L452 420H470M436 414.6L447 427H466" fill="none" stroke="#ff0000" stroke-width="1.1" stroke-linejoin="round"/>
<circle cx="436.0" cy="392.0" r="2.2"/>
<circle cx="436.0" cy="404.5" r="2.2"/>
<circle cx="436.0" cy="414.6" r="2.2"/>
<circle cx="428.0" cy="432.0" r="2.2"/>
<circle cx="362.0" cy="479.0" r="1.95"/>
<circle cx="359.0" cy="476.0" r="1.3"/>
<path d="M362.0 479.0L359.0 476.0" stroke="#ff0000" stroke-width="1.0"/>
<circle cx="369.6" cy="479.0" r="1.95"/>
<circle cx="366.6" cy="476.0" r="1.3"/>
<path d="M369.6 479.0L366.6 476.0" stroke="#ff0000" stroke-width="1.0"/>
<circle cx="377.2" cy="479.0" r="1.95"/>
<circle cx="374.2" cy="476.0" r="1.3"/>
<path d="M377.2 479.0L374.2 476.0" stroke="#ff0000" stroke-width="1.0"/>
<circle cx="384.8" cy="479.0" r="1.95"/>
<circle cx="381.8" cy="476.0" r="1.3"/>
<path d="M384.8 479.0L381.8 476.0" stroke="#ff0000" stroke-width="1.0"/>
<circle cx="392.4" cy="479.0" r="1.95"/>
<circle cx="389.4" cy="476.0" r="1.3"/>
<path d="M392.4 479.0L389.4 476.0" stroke="#ff0000" stroke-width="1.0"/>
<circle cx="400.0" cy="479.0" r="1.95"/>
<circle cx="397.0" cy="476.0" r="1.3"/>
<path d="M400.0 479.0L397.0 476.0" stroke="#ff0000" stroke-width="1.0"/>
<circle cx="407.6" cy="479.0" r="1.95"/>
<circle cx="404.6" cy="476.0" r="1.3"/>
<path d="M407.6 479.0L404.6 476.0" stroke="#ff0000" stroke-width="1.0"/>
<circle cx="362.0" cy="486.6" r="1.95"/>
<circle cx="359.0" cy="483.6" r="1.3"/>
<path d="M362.0 486.6L359.0 483.6" stroke="#ff0000" stroke-width="1.0"/>
<circle cx="369.6" cy="486.6" r="1.95"/>
<circle cx="366.6" cy="483.6" r="1.3"/>
<path d="M369.6 486.6L366.6 483.6" stroke="#ff0000" stroke-width="1.0"/>
<circle cx="377.2" cy="486.6" r="1.95"/>
<circle cx="374.2" cy="483.6" r="1.3"/>
<path d="M377.2 486.6L374.2 483.6" stroke="#ff0000" stroke-width="1.0"/>
<circle cx="384.8" cy="486.6" r="1.95"/>
<circle cx="381.8" cy="483.6" r="1.3"/>
<path d="M384.8 486.6L381.8 483.6" stroke="#ff0000" stroke-width="1.0"/>
<circle cx="392.4" cy="486.6" r="1.95"/>
<circle cx="389.4" cy="483.6" r="1.3"/>
<path d="M392.4 486.6L389.4 483.6" stroke="#ff0000" stroke-width="1.0"/>
<circle cx="400.0" cy="486.6" r="1.95"/>
<circle cx="397.0" cy="483.6" r="1.3"/>
<path d="M400.0 486.6L397.0 483.6" stroke="#ff0000" stroke-width="1.0"/>
<circle cx="407.6" cy="486.6" r="1.95"/>
<circle cx="404.6" cy="483.6" r="1.3"/>
<path d="M407.6 486.6L404.6 483.6" stroke="#ff0000" stroke-width="1.0"/>
<circle cx="362.0" cy="494.2" r="1.95"/>
<circle cx="359.0" cy="491.2" r="1.3"/>
<path d="M362.0 494.2L359.0 491.2" stroke="#ff0000" stroke-width="1.0"/>
<circle cx="369.6" cy="494.2" r="1.95"/>
<circle cx="366.6" cy="491.2" r="1.3"/>
<path d="M369.6 494.2L366.6 491.2" stroke="#ff0000" stroke-width="1.0"/>
<circle cx="377.2" cy="494.2" r="1.95"/>
<circle cx="374.2" cy="491.2" r="1.3"/>
<path d="M377.2 494.2L374.2 491.2" stroke="#ff0000" stroke-width="1.0"/>
<circle cx="384.8" cy="494.2" r="1.95"/>
<circle cx="381.8" cy="491.2" r="1.3"/>
<path d="M384.8 494.2L381.8 491.2" stroke="#ff0000" stroke-width="1.0"/>
<circle cx="392.4" cy="494.2" r="1.95"/>
<circle cx="389.4" cy="491.2" r="1.3"/>
<path d="M392.4 494.2L389.4 491.2" stroke="#ff0000" stroke-width="1.0"/>
<circle cx="400.0" cy="494.2" r="1.95"/>
<circle cx="397.0" cy="491.2" r="1.3"/>
<path d="M400.0 494.2L397.0 491.2" stroke="#ff0000" stroke-width="1.0"/>
<circle cx="407.6" cy="494.2" r="1.95"/>
<circle cx="404.6" cy="491.2" r="1.3"/>
<path d="M407.6 494.2L404.6 491.2" stroke="#ff0000" stroke-width="1.0"/>
<circle cx="362.0" cy="501.8" r="1.95"/>
<circle cx="359.0" cy="498.8" r="1.3"/>
<path d="M362.0 501.8L359.0 498.8" stroke="#ff0000" stroke-width="1.0"/>
<circle cx="369.6" cy="501.8" r="1.95"/>
<circle cx="366.6" cy="498.8" r="1.3"/>
<path d="M369.6 501.8L366.6 498.8" stroke="#ff0000" stroke-width="1.0"/>
<circle cx="377.2" cy="501.8" r="1.95"/>
<circle cx="374.2" cy="498.8" r="1.3"/>
<path d="M377.2 501.8L374.2 498.8" stroke="#ff0000" stroke-width="1.0"/>
<circle cx="384.8" cy="501.8" r="1.95"/>
<circle cx="381.8" cy="498.8" r="1.3"/>
<path d="M384.8 501.8L381.8 498.8" stroke="#ff0000" stroke-width="1.0"/>
<circle cx="392.4" cy="501.8" r="1.95"/>
<circle cx="389.4" cy="498.8" r="1.3"/>
<path d="M392.4 501.8L389.4 498.8" stroke="#ff0000" stroke-width="1.0"/>
<circle cx="400.0" cy="501.8" r="1.95"/>
<circle cx="397.0" cy="498.8" r="1.3"/>
<path d="M400.0 501.8L397.0 498.8" stroke="#ff0000" stroke-width="1.0"/>
<circle cx="407.6" cy="501.8" r="1.95"/>
<circle cx="404.6" cy="498.8" r="1.3"/>
<path d="M407.6 501.8L404.6 498.8" stroke="#ff0000" stroke-width="1.0"/>
<circle cx="362.0" cy="509.4" r="1.95"/>
<circle cx="359.0" cy="506.4" r="1.3"/>
<path d="M362.0 509.4L359.0 506.4" stroke="#ff0000" stroke-width="1.0"/>
<circle cx="369.6" cy="509.4" r="1.95"/>
<circle cx="366.6" cy="506.4" r="1.3"/>
<path d="M369.6 509.4L366.6 506.4" stroke="#ff0000" stroke-width="1.0"/>
<circle cx="377.2" cy="509.4" r="1.95"/>
<circle cx="374.2" cy="506.4" r="1.3"/>
<path d="M377.2 509.4L374.2 506.4" stroke="#ff0000" stroke-width="1.0"/>
<circle cx="384.8" cy="509.4" r="1.95"/>
<circle cx="381.8" cy="506.4" r="1.3"/>
<path d="M384.8 509.4L381.8 506.4" stroke="#ff0000" stroke-width="1.0"/>
<circle cx="392.4" cy="509.4" r="1.95"/>
<circle cx="389.4" cy="506.4" r="1.3"/>
<path d="M392.4 509.4L389.4 506.4" stroke="#ff0000" stroke-width="1.0"/>
<circle cx="400.0" cy="509.4" r="1.95"/>
<circle cx="397.0" cy="506.4" r="1.3"/>
<path d="M400.0 509.4L397.0 506.4" stroke="#ff0000" stroke-width="1.0"/>
<circle cx="407.6" cy="509.4" r="1.95"/>
<circle cx="404.6" cy="506.4" r="1.3"/>
<path d="M407.6 509.4L404.6 506.4" stroke="#ff0000" stroke-width="1.0"/>
<circle cx="362.0" cy="517.0" r="1.95"/>
<circle cx="359.0" cy="514.0" r="1.3"/>
<path d="M362.0 517.0L359.0 514.0" stroke="#ff0000" stroke-width="1.0"/>
<circle cx="369.6" cy="517.0" r="1.95"/>
<circle cx="366.6" cy="514.0" r="1.3"/>
<path d="M369.6 517.0L366.6 514.0" stroke="#ff0000" stroke-width="1.0"/>
<circle cx="377.2" cy="517.0" r="1.95"/>
<circle cx="374.2" cy="514.0" r="1.3"/>
<path d="M377.2 517.0L374.2 514.0" stroke="#ff0000" stroke-width="1.0"/>
<circle cx="384.8" cy="517.0" r="1.95"/>
<circle cx="381.8" cy="514.0" r="1.3"/>
<path d="M384.8 517.0L381.8 514.0" stroke="#ff0000" stroke-width="1.0"/>
<circle cx="392.4" cy="517.0" r="1.95"/>
<circle cx="389.4" cy="514.0" r="1.3"/>
<path d="M392.4 517.0L389.4 514.0" stroke="#ff0000" stroke-width="1.0"/>
<circle cx="400.0" cy="517.0" r="1.95"/>
<circle cx="397.0" cy="514.0" r="1.3"/>
<path d="M400.0 517.0L397.0 514.0" stroke="#ff0000" stroke-width="1.0"/>
<circle cx="407.6" cy="517.0" r="1.95"/>
<circle cx="404.6" cy="514.0" r="1.3"/>
<path d="M407.6 517.0L404.6 514.0" stroke="#ff0000" stroke-width="1.0"/>
<circle cx="362.0" cy="524.6" r="1.95"/>
<circle cx="359.0" cy="521.6" r="1.3"/>
<path d="M362.0 524.6L359.0 521.6" stroke="#ff0000" stroke-width="1.0"/>
<circle cx="369.6" cy="524.6" r="1.95"/>
<circle cx="366.6" cy="521.6" r="1.3"/>
<path d="M369.6 524.6L366.6 521.6" stroke="#ff0000" stroke-width="1.0"/>
<circle cx="377.2" cy="524.6" r="1.95"/>
<circle cx="374.2" cy="521.6" r="1.3"/>
<path d="M377.2 524.6L374.2 521.6" stroke="#ff0000" stroke-width="1.0"/>
<circle cx="384.8" cy="524.6" r="1.95"/>
<circle cx="381.8" cy="521.6" r="1.3"/>
<path d="M384.8 524.6L381.8 521.6" stroke="#ff0000" stroke-width="1.0"/>
<circle cx="392.4" cy="524.6" r="1.95"/>
<circle cx="389.4" cy="521.6" r="1.3"/>
<path d="M392.4 524.6L389.4 521.6" stroke="#ff0000" stroke-width="1.0"/>
<circle cx="400.0" cy="524.6" r="1.95"/>
<circle cx="397.0" cy="521.6" r="1.3"/>
<path d="M400.0 524.6L397.0 521.6" stroke="#ff0000" stroke-width="1.0"/>
<circle cx="407.6" cy="524.6" r="1.95"/>
<circle cx="404.6" cy="521.6" r="1.3"/>
<path d="M407.6 524.6L404.6 521.6" stroke="#ff0000" stroke-width="1.0"/>
<path d="M372 466V478M378 466V478M384 466V476" fill="none" stroke="#ff0000" stroke-width="1.2" stroke-linejoin="round"/>
<path d="M395 470H405L410 476" fill="none" stroke="#ff0000" stroke-width="1.2" stroke-linejoin="round"/>
<path d="M342.5 531.0V490.0L354.0 478.0H366.0" fill="none" stroke="#ff0000" stroke-width="1.1" stroke-linejoin="round"/>
<path d="M342.5 531.0L400.0 584.0H414" fill="none" stroke="#ff0000" stroke-width="1.1" stroke-linejoin="round"/>
<path d="M345.0 528.5V491.0L355.5 480.5H366.0" fill="none" stroke="#ff0000" stroke-width="1.1" stroke-linejoin="round"/>
<path d="M345.0 528.5L402.5 583.2H414" fill="none" stroke="#ff0000" stroke-width="1.1" stroke-linejoin="round"/>
<path d="M347.5 526.0V492.0L357.0 483.0H366.0" fill="none" stroke="#ff0000" stroke-width="1.1" stroke-linejoin="round"/>
<path d="M347.5 526.0L405.0 582.5H414" fill="none" stroke="#ff0000" stroke-width="1.1" stroke-linejoin="round"/>
<path d="M350.0 523.5V493.0L358.5 485.5H366.0" fill="none" stroke="#ff0000" stroke-width="1.1" stroke-linejoin="round"/>
<path d="M350.0 523.5L407.5 581.8H414" fill="none" stroke="#ff0000" stroke-width="1.1" stroke-linejoin="round"/>
<path d="M352.5 521.0V494.0L360.0 488.0H366.0" fill="none" stroke="#ff0000" stroke-width="1.1" stroke-linejoin="round"/>
<path d="M352.5 521.0L410.0 581.0H414" fill="none" stroke="#ff0000" stroke-width="1.1" stroke-linejoin="round"/>
<path d="M355.0 518.5V495.0L361.5 490.5H366.0" fill="none" stroke="#ff0000" stroke-width="1.1" stroke-linejoin="round"/>
<path d="M355.0 518.5L412.5 580.2H414" fill="none" stroke="#ff0000" stroke-width="1.1" stroke-linejoin="round"/>
<path d="M357.5 516.0V496.0L363.0 493.0H366.0" fill="none" stroke="#ff0000" stroke-width="1.1" stroke-linejoin="round"/>
<path d="M357.5 516.0L415.0 579.5H414" fill="none" stroke="#ff0000" stroke-width="1.1" stroke-linejoin="round"/>
<path d="M360.0 513.5V497.0L364.5 495.5H366.0" fill="none" stroke="#ff0000" stroke-width="1.1" stroke-linejoin="round"/>
<path d="M360.0 513.5L417.5 578.8H414" fill="none" stroke="#ff0000" stroke-width="1.1" stroke-linejoin="round"/>
<circle cx="345.0" cy="527.0" r="2.2"/>
<circle cx="351.0" cy="538.0" r="2.2"/>
<circle cx="344.7" cy="563.0" r="2.2"/>
<circle cx="344.7" cy="574.5" r="2.2"/>
<circle cx="344.7" cy="586.0" r="2.2"/>
<circle cx="344.7" cy="597.5" r="2.2"/>
<circle cx="344.7" cy="609.0" r="2.2"/>
<circle cx="344.7" cy="620.5" r="2.2"/>
<circle cx="344.7" cy="632.0" r="2.2"/>
<circle cx="344.7" cy="644.0" r="2.2"/>
<circle cx="344.7" cy="655.0" r="2.2"/>
<circle cx="344.7" cy="666.7" r="2.2"/>
<circle cx="344.7" cy="678.5" r="2.2"/>
<circle cx="344.7" cy="689.0" r="2.2"/>
<circle cx="344.7" cy="700.0" r="2.2"/>
<circle cx="344.7" cy="711.5" r="2.2"/>
<circle cx="344.7" cy="726.0" r="2.2"/>
<circle cx="344.7" cy="739.0" r="2.2"/>
<path d="M344.7 656V663" fill="none" stroke="#ff0000" stroke-width="1.8" stroke-linejoin="round"/>
<path d="M344.7 668V675" fill="none" stroke="#ff0000" stroke-width="1.8" stroke-linejoin="round"/>
<path d="M344.7 680V687" fill="none" stroke="#ff0000" stroke-width="1.8" stroke-linejoin="round"/>
<path d="M344.7 707V714" fill="none" stroke="#ff0000" stroke-width="1.8" stroke-linejoin="round"/>
<path d="M344.7 718V725" fill="none" stroke="#ff0000" stroke-width="1.8" stroke-linejoin="round"/>
<path d="M344.7 730V737" fill="none" stroke="#ff0000" stroke-width="1.8" stroke-linejoin="round"/>
<rect x="381.5" y="593.0" width="11.0" height="2.4"/>
<path d="M376 594.2H381.5" fill="none" stroke="#ff0000" stroke-width="1.0" stroke-linejoin="round"/>
<rect x="381.5" y="597.3" width="11.0" height="2.4"/>
<rect x="381.5" y="601.6" width="11.0" height="2.4"/>
<rect x="381.5" y="605.9" width="11.0" height="2.4"/>
<path d="M376 607.1H381.5" fill="none" stroke="#ff0000" stroke-width="1.0" stroke-linejoin="round"/>
<rect x="381.5" y="610.2" width="11.0" height="2.4"/>
<rect x="381.5" y="614.5" width="11.0" height="2.4"/>
<rect x="381.5" y="618.8" width="11.0" height="2.4"/>
<path d="M376 620.0H381.5" fill="none" stroke="#ff0000" stroke-width="1.0" stroke-linejoin="round"/>
<rect x="381.5" y="623.1" width="11.0" height="2.4"/>
<rect x="381.5" y="627.4" width="11.0" height="2.4"/>
<rect x="381.5" y="631.7" width="11.0" height="2.4"/>
<path d="M376 632.9H381.5" fill="none" stroke="#ff0000" stroke-width="1.0" stroke-linejoin="round"/>
<rect x="381.5" y="636.0" width="11.0" height="2.4"/>
<rect x="381.5" y="640.3" width="11.0" height="2.4"/>
<rect x="381.5" y="644.6" width="11.0" height="2.4"/>
<path d="M376 645.8H381.5" fill="none" stroke="#ff0000" stroke-width="1.0" stroke-linejoin="round"/>
<rect x="381.5" y="648.9" width="11.0" height="2.4"/>
<rect x="381.5" y="653.2" width="11.0" height="2.4"/>
<rect x="381.5" y="657.5" width="11.0" height="2.4"/>
<path d="M376 658.7H381.5" fill="none" stroke="#ff0000" stroke-width="1.0" stroke-linejoin="round"/>
<rect x="381.5" y="661.8" width="11.0" height="2.4"/>
<rect x="381.5" y="666.1" width="11.0" height="2.4"/>
<rect x="381.5" y="670.4" width="11.0" height="2.4"/>
<path d="M376 671.6H381.5" fill="none" stroke="#ff0000" stroke-width="1.0" stroke-linejoin="round"/>
<rect x="381.5" y="674.7" width="11.0" height="2.4"/>
<rect x="381.5" y="679.0" width="11.0" height="2.4"/>
<rect x="381.5" y="683.3" width="11.0" height="2.4"/>
<path d="M376 684.5H381.5" fill="none" stroke="#ff0000" stroke-width="1.0" stroke-linejoin="round"/>
<rect x="381.5" y="687.6" width="11.0" height="2.4"/>
<rect x="381.5" y="691.9" width="11.0" height="2.4"/>
<rect x="381.5" y="696.2" width="11.0" height="2.4"/>
<path d="M376 697.4H381.5" fill="none" stroke="#ff0000" stroke-width="1.0" stroke-linejoin="round"/>
<rect x="381.5" y="700.5" width="11.0" height="2.4"/>
<rect x="381.5" y="704.8" width="11.0" height="2.4"/>
<rect x="381.5" y="709.1" width="11.0" height="2.4"/>
<path d="M376 710.3H381.5" fill="none" stroke="#ff0000" stroke-width="1.0" stroke-linejoin="round"/>
<rect x="381.5" y="713.4" width="11.0" height="2.4"/>
<path d="M394.5 597H405V640" fill="none" stroke="#ff0000" stroke-width="1.2" stroke-linejoin="round"/>
<path d="M398 640V700H394" fill="none" stroke="#ff0000" stroke-width="1.2" stroke-linejoin="round"/>
<path d="M405 640V690L410 697" fill="none" stroke="#ff0000" stroke-width="1.2" stroke-linejoin="round"/>
<path d="M402 578V735L408 742" fill="none" stroke="#ff0000" stroke-width="1.1" stroke-linejoin="round"/>
<path d="M405 580V732L411 739" fill="none" stroke="#ff0000" stroke-width="1.1" stroke-linejoin="round"/>
<path d="M408 582V729L414 736" fill="none" stroke="#ff0000" stroke-width="1.1" stroke-linejoin="round"/>
<path d="M411 584V726L417 733" fill="none" stroke="#ff0000" stroke-width="1.1" stroke-linejoin="round"/>
<path d="M414 586V723L420 730" fill="none" stroke="#ff0000" stroke-width="1.1" stroke-linejoin="round"/>
<rect x="396.0" y="583.0" width="2.4" height="13.0"/>
<rect x="399.5" y="583.0" width="2.4" height="13.0"/>
<rect x="403.0" y="583.0" width="2.4" height="13.0"/>
<rect x="406.5" y="583.0" width="2.4" height="13.0"/>
<rect x="410.0" y="583.0" width="2.4" height="13.0"/>
<rect x="396.0" y="719.0" width="2.4" height="13.0"/>
<rect x="399.5" y="719.0" width="2.4" height="13.0"/>
<rect x="403.0" y="719.0" width="2.4" height="13.0"/>
<rect x="406.5" y="719.0" width="2.4" height="13.0"/>
<rect x="410.0" y="719.0" width="2.4" height="13.0"/>
<path d="M376 588V582L381 578H394L398 583" fill="none" stroke="#ff0000" stroke-width="1.2" stroke-linejoin="round"/>
<rect x="383.0" y="532.0" width="8.0" height="6.0"/>
<rect x="393.0" y="540.0" width="6.0" height="6.0"/>
<path d="M380 520L392 532M386 516L404 534H414M391 540L402 551H414M372 528L385 545L396 556H414" fill="none" stroke="#ff0000" stroke-width="1.1" stroke-linejoin="round"/>
<path d="M394 610H400M394 625H400M394 650H400M394 665H400" fill="none" stroke="#ff0000" stroke-width="1.1" stroke-linejoin="round"/>
<circle cx="397.0" cy="605.0" r="2.2"/>
<circle cx="397.0" cy="620.0" r="2.2"/>
<circle cx="396.0" cy="695.0" r="2.2"/>
<circle cx="389.0" cy="730.0" r="2.2"/>
<circle cx="380.0" cy="742.0" r="2.2"/>
<rect x="356.0" y="589.0" width="6.0" height="8.0"/>
<rect x="364.0" y="589.0" width="6.0" height="8.0"/>
<circle cx="372.0" cy="592.0" r="2.2"/>
<circle cx="369.0" cy="624.0" r="2.2"/>
<circle cx="383.0" cy="578.0" r="2.2"/>
<circle cx="400.0" cy="613.0" r="2.2"/>
<circle cx="405.0" cy="680.0" r="2.2"/>
<circle cx="406.0" cy="718.0" r="2.2"/>
<circle cx="368.0" cy="653.0" r="2.2"/>
<circle cx="356.0" cy="665.0" r="2.2"/>
<circle cx="357.0" cy="683.0" r="2.2"/>
<circle cx="368.0" cy="690.0" r="2.2"/>
<circle cx="371.0" cy="702.0" r="2.2"/>
<circle cx="356.0" cy="708.0" r="2.2"/>
<rect x="356.0" y="604.0" width="9.0" height="7.0"/>
<rect x="356.0" y="618.0" width="9.0" height="7.0"/>
<rect x="354.0" y="636.0" width="8.0" height="8.0"/>
<rect x="364.0" y="636.0" width="6.0" height="8.0"/>
<path d="M362 597V604M360 611V618M365 628V640" fill="none" stroke="#ff0000" stroke-width="1.3" stroke-linejoin="round"/>
<path d="M367 605H372V601" fill="none" stroke="#ff0000" stroke-width="1.1" stroke-linejoin="round"/>
<circle cx="356.7" cy="672.5" r="2.2"/>
<circle cx="356.7" cy="684.0" r="2.2"/>
<circle cx="356.7" cy="697.0" r="2.2"/>
<circle cx="356.7" cy="710.0" r="2.2"/>
<circle cx="356.7" cy="722.0" r="2.2"/>
<circle cx="356.7" cy="736.0" r="2.2"/>
<circle cx="367.5" cy="667.0" r="2.2"/>
<circle cx="366.0" cy="692.0" r="2.2"/>
<circle cx="365.0" cy="710.5" r="2.2"/>
<circle cx="403.0" cy="697.0" r="2.2"/>
<circle cx="401.0" cy="705.0" r="2.2"/>
<circle cx="396.0" cy="745.0" r="2.2"/>
<circle cx="390.0" cy="777.5" r="2.2"/>
<circle cx="396.0" cy="643.0" r="2.2"/>
<path d="M351.5 672.5H356.7M351.5 684H356.7M351.5 697H356.7M356.7 710V716M356.7 722V728" fill="none" stroke="#ff0000" stroke-width="1.3" stroke-linejoin="round"/>
<rect x="364.0" y="670.0" width="7.0" height="5.5"/>
<rect x="364.0" y="680.0" width="7.0" height="4.5"/>
<path d="M367.5 675.5V680M367.5 684.5V690L372 694H388M371 672H381" fill="none" stroke="#ff0000" stroke-width="1.2" stroke-linejoin="round"/>
<path d="M356.7 736L362 730V707L371 698H393" fill="none" stroke="#ff0000" stroke-width="1.3" stroke-linejoin="round"/>
<path d="M377.5 643V671H381.5M377.5 643H382" fill="none" stroke="#ff0000" stroke-width="1.2" stroke-linejoin="round"/>
<path d="M397.5 643V652L392 658M400 650V685L396 690V700" fill="none" stroke="#ff0000" stroke-width="1.2" stroke-linejoin="round"/>
<path d="M377.5 712V722L395 739H414M383 717V727L397 741H414" fill="none" stroke="#ff0000" stroke-width="1.3" stroke-linejoin="round"/>
<rect x="381.0" y="740.0" width="6.5" height="5.5"/>
<rect x="381.0" y="750.0" width="6.5" height="5.5"/>
<path d="M375 752.5H381M384 738V740" fill="none" stroke="#ff0000" stroke-width="1.2" stroke-linejoin="round"/>
<rect x="400.0" y="743.0" width="4.5" height="10.0"/>
<rect x="408.0" y="743.0" width="4.5" height="10.0"/>
<path d="M404.5 748L397 755H389" fill="none" stroke="#ff0000" stroke-width="1.2" stroke-linejoin="round"/>
<path d="M382 763H400L404 771V777" fill="none" stroke="#ff0000" stroke-width="1.3" stroke-linejoin="round"/>
<rect x="400.0" y="777.0" width="4.5" height="11.0"/>
<rect x="408.0" y="777.0" width="4.5" height="11.0"/>
<path d="M412 757V770L416 775" fill="none" stroke="#ff0000" stroke-width="1.2" stroke-linejoin="round"/></g></svg><svg class="a" style="left:0;top:0" width="917" height="1080" viewBox="0 0 917 1080">
<g transform="translate(313.5 819.4)">
<path d="M0 0V-17.4A17.4 17.4 0 0 0 -17.4 0Z" fill="#6a9000"/><path d="M0 0V-17.4A17.4 17.4 0 0 1 17.4 0Z" fill="#8a6a00"/>
<path d="M0 0V17.4A17.4 17.4 0 0 1 -17.4 0Z" fill="#8a6a00"/><path d="M0 0V17.4A17.4 17.4 0 0 0 17.4 0Z" fill="#6a9000"/>
<path d="M0 0V-14.6A14.6 14.6 0 0 0 -14.6 0Z" fill="#e2ea00"/><path d="M0 0V-14.6A14.6 14.6 0 0 1 14.6 0Z" fill="#dcd000"/>
<path d="M0 0V14.6A14.6 14.6 0 0 1 -14.6 0Z" fill="#dcd000"/><path d="M0 0V14.6A14.6 14.6 0 0 0 14.6 0Z" fill="#e2ea00"/>
<path d="M0 0V-8.7A8.7 8.7 0 0 0 -8.7 0Z" fill="#6a9000"/><path d="M0 0V-8.7A8.7 8.7 0 0 1 8.7 0Z" fill="#8a6800"/>
<path d="M0 0V8.7A8.7 8.7 0 0 1 -8.7 0Z" fill="#8a6800"/><path d="M0 0V8.7A8.7 8.7 0 0 0 8.7 0Z" fill="#6a9000"/>
<rect x="-0.5" y="-19" width="1" height="38" fill="#e03000"/><rect x="-19" y="-0.5" width="38" height="1" fill="#e03000"/>
</g></svg><svg class="a" style="left:0;top:0" width="917" height="1080" shape-rendering="crispEdges"><rect x="293" y="196" width="615" height="1" fill="#b4b4b4"/><rect x="293" y="326" width="615" height="1" fill="#b4b4b4"/></svg><style>
.dl{position:absolute;font-size:11px;line-height:1;white-space:nowrap;color:#000;letter-spacing:-0.15px}
.dg{position:absolute;border:1px solid #d5dfe5;border-radius:3px}
.dgt{position:absolute;font-size:11px;line-height:1;white-space:nowrap;background:#f0f0f0;padding:0 2px;letter-spacing:-0.12px}
.ed{position:absolute;background:#fff;border:1px solid;border-color:#abadb3 #dbdfe6 #e3e9ef #e2e3ea}
.edd{position:absolute;background:#f0f0f0;border:1px solid #adb2b5}
.cmbd{position:absolute;background:#f2f2f2;border:1px solid #c9c9c9;border-radius:2px}
.cmb{position:absolute;border:1px solid #707070;border-radius:2px;background:linear-gradient(#f2f2f2 0,#ebebeb 49%,#dddddd 50%,#cfcfcf 100%)}
.spn{position:absolute;width:15px}
.dbtn{position:absolute;border:1px solid #707070;border-radius:3px;background:linear-gradient(#f2f2f2 0,#ebebeb 45%,#dddddd 50%,#cfcfcf 100%)}
.dbtn span{position:absolute;left:0;right:0;text-align:center;top:5px;font-size:11px;line-height:1}
.dcb{position:absolute;width:13px;height:13px;border:1px solid #8f8f8f;background:linear-gradient(135deg,#dcdcdc,#f8f8f8)}
.dcb::after{content:"";position:absolute;left:1px;top:1px;right:1px;bottom:1px;border:1px solid #f4f4f4}
</style>
<div class="a" style="left:414px;top:474px;width:363px;height:538px;border-radius:6px 6px 4px 4px;border:1px solid rgba(0,0,0,.9);box-shadow:inset 0 0 0 1px rgba(225,225,225,.85);backdrop-filter:blur(6px);background:linear-gradient(rgba(215,215,215,.42),rgba(170,170,170,.35) 27px,rgba(160,160,160,.2) 40px,rgba(140,140,140,.1) 200px)"></div>
<div class="a" style="left:420px;top:501px;width:351px;height:506px;border:1px solid #d8d8d8"></div>
<div class="a" style="left:415px;top:500px;width:5px;height:510px;background:linear-gradient(rgba(220,140,140,.75) 0,rgba(235,150,150,.85) 60px,rgba(225,135,135,.8) 118px,rgba(70,30,30,.7) 135px,rgba(70,30,30,.6) 160px,rgba(220,80,80,.75) 175px,rgba(200,60,60,.7) 280px,rgba(0,0,0,0) 295px)"></div>
<div class="a" style="left:416px;top:476px;width:359px;height:26px;border-radius:5px 5px 0 0;background:linear-gradient(90deg,rgba(225,175,175,.5) 0,rgba(215,160,160,.45) 55px,rgba(235,25,25,.45) 72px,rgba(235,25,25,.45) 165px,rgba(130,10,10,.5) 180px,rgba(120,10,10,.45) 232px,rgba(60,60,60,.1) 250px)"></div>
<svg class="a" style="left:421px;top:480px" width="16" height="16" viewBox="0 0 16 16"><rect width="16" height="16" fill="#2a2212"/><rect x="2.5" y="1.5" width="11" height="13" rx="5" fill="none" stroke="#d88a18" stroke-width="1.3"/><path d="M5 6a3 3 0 0 1 6 0c0 2-3 3.5-5 6h5.5" fill="none" stroke="#e8901a" stroke-width="1.6"/></svg>
<div class="dl" style="left:442px;top:482px;font-size:12px;color:#101018">Local Tool Edit*</div>
<div class="a" style="left:695px;top:474px;width:29px;height:19px;border:1px solid #404040;border-top:none;border-radius:0 0 0 4px;background:linear-gradient(rgba(240,240,240,.55),rgba(170,170,170,.45) 45%,rgba(90,70,80,.55) 55%,rgba(110,100,110,.5))"></div>
<div class="a" style="left:723px;top:474px;width:48px;height:19px;border:1px solid #404040;border-top:none;border-radius:0 0 4px 0;background:linear-gradient(#e8a898 0,#d87a68 40%,#c03818 55%,#d06040 80%,#e08a70)"></div>
<svg class="a" style="left:704px;top:477px" width="11" height="13" viewBox="0 0 11 13"><path d="M2.5 4a3 3 0 0 1 6 0c0 2-3 2.5-3 4.5" fill="none" stroke="#3a3a5a" stroke-width="3.6"/><path d="M2.5 4a3 3 0 0 1 6 0c0 2-3 2.5-3 4.5" fill="none" stroke="#f4f4f4" stroke-width="1.8"/><rect x="3.8" y="9.8" width="3.4" height="3" fill="#3a3a5a"/><rect x="4.6" y="10.5" width="1.8" height="1.6" fill="#f4f4f4"/></svg>
<svg class="a" style="left:741px;top:478px" width="13" height="11" viewBox="0 0 13 11"><path d="M1.5 1L11.5 10M11.5 1L1.5 10" stroke="#3a3a5a" stroke-width="3.8"/><path d="M1.5 1L11.5 10M11.5 1L1.5 10" stroke="#f4f4f4" stroke-width="2"/></svg>
<div class="a" style="left:420px;top:502px;width:351px;height:504px;background:#f0f0f0;border:1px solid #2a2a2a"></div>
<div class="dg" style="left:428px;top:516px;width:335px;height:171px"></div>
<div class="dgt" style="left:434px;top:510px">Tool Info</div>
<div class="dl" style="left:433px;top:538px">Tool Type</div>
<div class="cmbd" style="left:487px;top:533px;width:270px;height:20px"></div>
<div class="dl" style="left:490px;top:538px;color:#8a8a8a">End Mill</div>
<svg class="a" style="left:743px;top:540px" width="8" height="5"><path d="M0 0H8L4 4z" fill="#a0a0a0"/></svg>
<div class="dl" style="left:433px;top:563px">Name</div>
<div class="dcb" style="left:468px;top:562px"></div>
<svg class="a" style="left:470px;top:563px" width="10" height="10"><path d="M1.5 5L4 8.5L8.5 1" fill="none" stroke="#3a50a8" stroke-width="1.8"/></svg>
<div class="ed" style="left:487px;top:559px;width:270px;height:18px"></div>
<div class="dl" style="left:490px;top:564px;color:#000">End Mill (Ø1 mm)</div>
<div class="dl" style="left:457px;top:586px">Note</div>
<div class="ed" style="left:487px;top:584px;width:270px;height:71px"></div>
<div class="dl" style="left:456px;top:667px">Units</div>
<div class="cmbd" style="left:487px;top:662px;width:132px;height:19px"></div>
<div class="dl" style="left:490px;top:667px;color:#8a8a8a">mm</div>
<svg class="a" style="left:606px;top:669px" width="8" height="5"><path d="M0 0H8L4 4z" fill="#a0a0a0"/></svg>
<div class="cmb" style="left:625px;top:662px;width:132px;height:19px"></div>
<div class="dl" style="left:628px;top:667px">mm/sec</div>
<svg class="a" style="left:743px;top:669px" width="8" height="5"><path d="M0 0H8L4 4z" fill="#000"/></svg>
<div class="dg" style="left:428px;top:701px;width:335px;height:63px"></div>
<div class="dgt" style="left:434px;top:695px">Geometry</div>
<div class="dl" style="left:440px;top:722px">Diameter</div>
<div class="ed" style="left:491px;top:717px;width:266px;height:18px"></div>
<div class="dl" style="left:494px;top:722px;color:#000">1,000 mm</div>
<svg class="a" style="left:741px;top:718px" width="15" height="16" viewBox="0 0 15 16"><rect x=".5" y=".5" width="14" height="15" fill="#f4f4f4" stroke="#c0c0c0"/><path d="M.5 8.0H14.5" stroke="#c0c0c0"/><path d="M4.5 6.0L7.5 3.0L10.5 6.0z" fill="#5a6cb8"/><path d="M4.5 10.0L7.5 13.0L10.5 10.0z" fill="#5a6cb8"/></svg>
<div class="dl" style="left:433px;top:746px">Side Angle</div>
<div class="edd" style="left:491px;top:742px;width:266px;height:17px"></div>
<div class="dl" style="left:494px;top:746px;color:#8a8a8a">0,0 °</div>
<svg class="a" style="left:741px;top:743px" width="15" height="15" viewBox="0 0 15 15"><rect x=".5" y=".5" width="14" height="14" fill="#f4f4f4" stroke="#c0c0c0"/><path d="M.5 7.5H14.5" stroke="#c0c0c0"/><path d="M4.5 5.5L7.5 2.5L10.5 5.5z" fill="#a8a8a8"/><path d="M4.5 9.5L7.5 12.5L10.5 9.5z" fill="#a8a8a8"/></svg>
<div class="dg" style="left:428px;top:779px;width:335px;height:89px"></div>
<div class="dgt" style="left:434px;top:773px">Cutting Parameters</div>
<div class="dl" style="left:468px;top:800px">Depth</div>
<div class="ed" style="left:505px;top:796px;width:252px;height:17px"></div>
<div class="dl" style="left:508px;top:800px;color:#000">2,000 mm</div>
<svg class="a" style="left:741px;top:797px" width="15" height="15" viewBox="0 0 15 15"><rect x=".5" y=".5" width="14" height="14" fill="#f4f4f4" stroke="#c0c0c0"/><path d="M.5 7.5H14.5" stroke="#c0c0c0"/><path d="M4.5 5.5L7.5 2.5L10.5 5.5z" fill="#5a6cb8"/><path d="M4.5 9.5L7.5 12.5L10.5 9.5z" fill="#5a6cb8"/></svg>
<div class="dl" style="left:453px;top:824px">Stepover</div>
<div class="ed" style="left:505px;top:820px;width:122px;height:17px"></div>
<div class="dl" style="left:508px;top:824px;color:#000">0,500 mm</div>
<svg class="a" style="left:611px;top:821px" width="15" height="15" viewBox="0 0 15 15"><rect x=".5" y=".5" width="14" height="14" fill="#f4f4f4" stroke="#c0c0c0"/><path d="M.5 7.5H14.5" stroke="#c0c0c0"/><path d="M4.5 5.5L7.5 2.5L10.5 5.5z" fill="#5a6cb8"/><path d="M4.5 9.5L7.5 12.5L10.5 9.5z" fill="#5a6cb8"/></svg>
<div class="ed" style="left:634px;top:820px;width:123px;height:17px"></div>
<div class="dl" style="left:637px;top:824px;color:#000">50,00 %</div>
<svg class="a" style="left:741px;top:821px" width="15" height="15" viewBox="0 0 15 15"><rect x=".5" y=".5" width="14" height="14" fill="#f4f4f4" stroke="#c0c0c0"/><path d="M.5 7.5H14.5" stroke="#c0c0c0"/><path d="M4.5 5.5L7.5 2.5L10.5 5.5z" fill="#5a6cb8"/><path d="M4.5 9.5L7.5 12.5L10.5 9.5z" fill="#5a6cb8"/></svg>
<div class="dl" style="left:433px;top:848px">One-turn Cut</div>
<div class="ed" style="left:505px;top:844px;width:122px;height:17px"></div>
<div class="dl" style="left:508px;top:848px;color:#000">0,100 mm</div>
<svg class="a" style="left:611px;top:845px" width="15" height="15" viewBox="0 0 15 15"><rect x=".5" y=".5" width="14" height="14" fill="#f4f4f4" stroke="#c0c0c0"/><path d="M.5 7.5H14.5" stroke="#c0c0c0"/><path d="M4.5 5.5L7.5 2.5L10.5 5.5z" fill="#5a6cb8"/><path d="M4.5 9.5L7.5 12.5L10.5 9.5z" fill="#5a6cb8"/></svg>
<div class="ed" style="left:634px;top:844px;width:123px;height:17px"></div>
<div class="dl" style="left:637px;top:848px;color:#000">10,00 %</div>
<svg class="a" style="left:741px;top:845px" width="15" height="15" viewBox="0 0 15 15"><rect x=".5" y=".5" width="14" height="14" fill="#f4f4f4" stroke="#c0c0c0"/><path d="M.5 7.5H14.5" stroke="#c0c0c0"/><path d="M4.5 5.5L7.5 2.5L10.5 5.5z" fill="#5a6cb8"/><path d="M4.5 9.5L7.5 12.5L10.5 9.5z" fill="#5a6cb8"/></svg>
<div class="dg" style="left:428px;top:881px;width:335px;height:87px"></div>
<div class="dgt" style="left:434px;top:875px">Feed Speeds (Set checkbox for automatic calculation)</div>
<div class="dl" style="left:447px;top:902px">Spindle Speed</div>
<div class="ed" style="left:521px;top:898px;width:236px;height:18px"></div>
<div class="dl" style="left:524px;top:903px;color:#000">12000 r.p.m.</div>
<svg class="a" style="left:741px;top:899px" width="15" height="16" viewBox="0 0 15 16"><rect x=".5" y=".5" width="14" height="15" fill="#f4f4f4" stroke="#c0c0c0"/><path d="M.5 8.0H14.5" stroke="#c0c0c0"/><path d="M4.5 6.0L7.5 3.0L10.5 6.0z" fill="#5a6cb8"/><path d="M4.5 10.0L7.5 13.0L10.5 10.0z" fill="#5a6cb8"/></svg>
<div class="dl" style="left:445px;top:925px">Feed Rate</div>
<div class="dcb" style="left:502px;top:923px"></div>
<div class="ed" style="left:521px;top:922px;width:236px;height:17px"></div>
<div class="dl" style="left:524px;top:926px;color:#000">20,000 mm/sec</div>
<svg class="a" style="left:741px;top:923px" width="15" height="15" viewBox="0 0 15 15"><rect x=".5" y=".5" width="14" height="14" fill="#f4f4f4" stroke="#c0c0c0"/><path d="M.5 7.5H14.5" stroke="#c0c0c0"/><path d="M4.5 5.5L7.5 2.5L10.5 5.5z" fill="#5a6cb8"/><path d="M4.5 9.5L7.5 12.5L10.5 9.5z" fill="#5a6cb8"/></svg>
<div class="dl" style="left:438px;top:949px">Plunge Rate</div>
<div class="dcb" style="left:502px;top:947px"></div>
<div class="ed" style="left:521px;top:946px;width:236px;height:17px"></div>
<div class="dl" style="left:524px;top:950px;color:#000">10,000 mm/sec</div>
<svg class="a" style="left:741px;top:947px" width="15" height="15" viewBox="0 0 15 15"><rect x=".5" y=".5" width="14" height="14" fill="#f4f4f4" stroke="#c0c0c0"/><path d="M.5 7.5H14.5" stroke="#c0c0c0"/><path d="M4.5 5.5L7.5 2.5L10.5 5.5z" fill="#5a6cb8"/><path d="M4.5 9.5L7.5 12.5L10.5 9.5z" fill="#5a6cb8"/></svg>
<div class="dbtn" style="left:609px;top:977px;width:73px;height:22px;border-color:#3c7fb1;box-shadow:inset 0 0 0 1px #5cc8f4;background:linear-gradient(#eef3f7 0,#e4eaef 45%,#d3dbe2 50%,#c9d2d9 100%)"><span>OK</span></div>
<div class="dbtn" style="left:690px;top:977px;width:73px;height:22px"><span>Cancel</span></div></body></html>
